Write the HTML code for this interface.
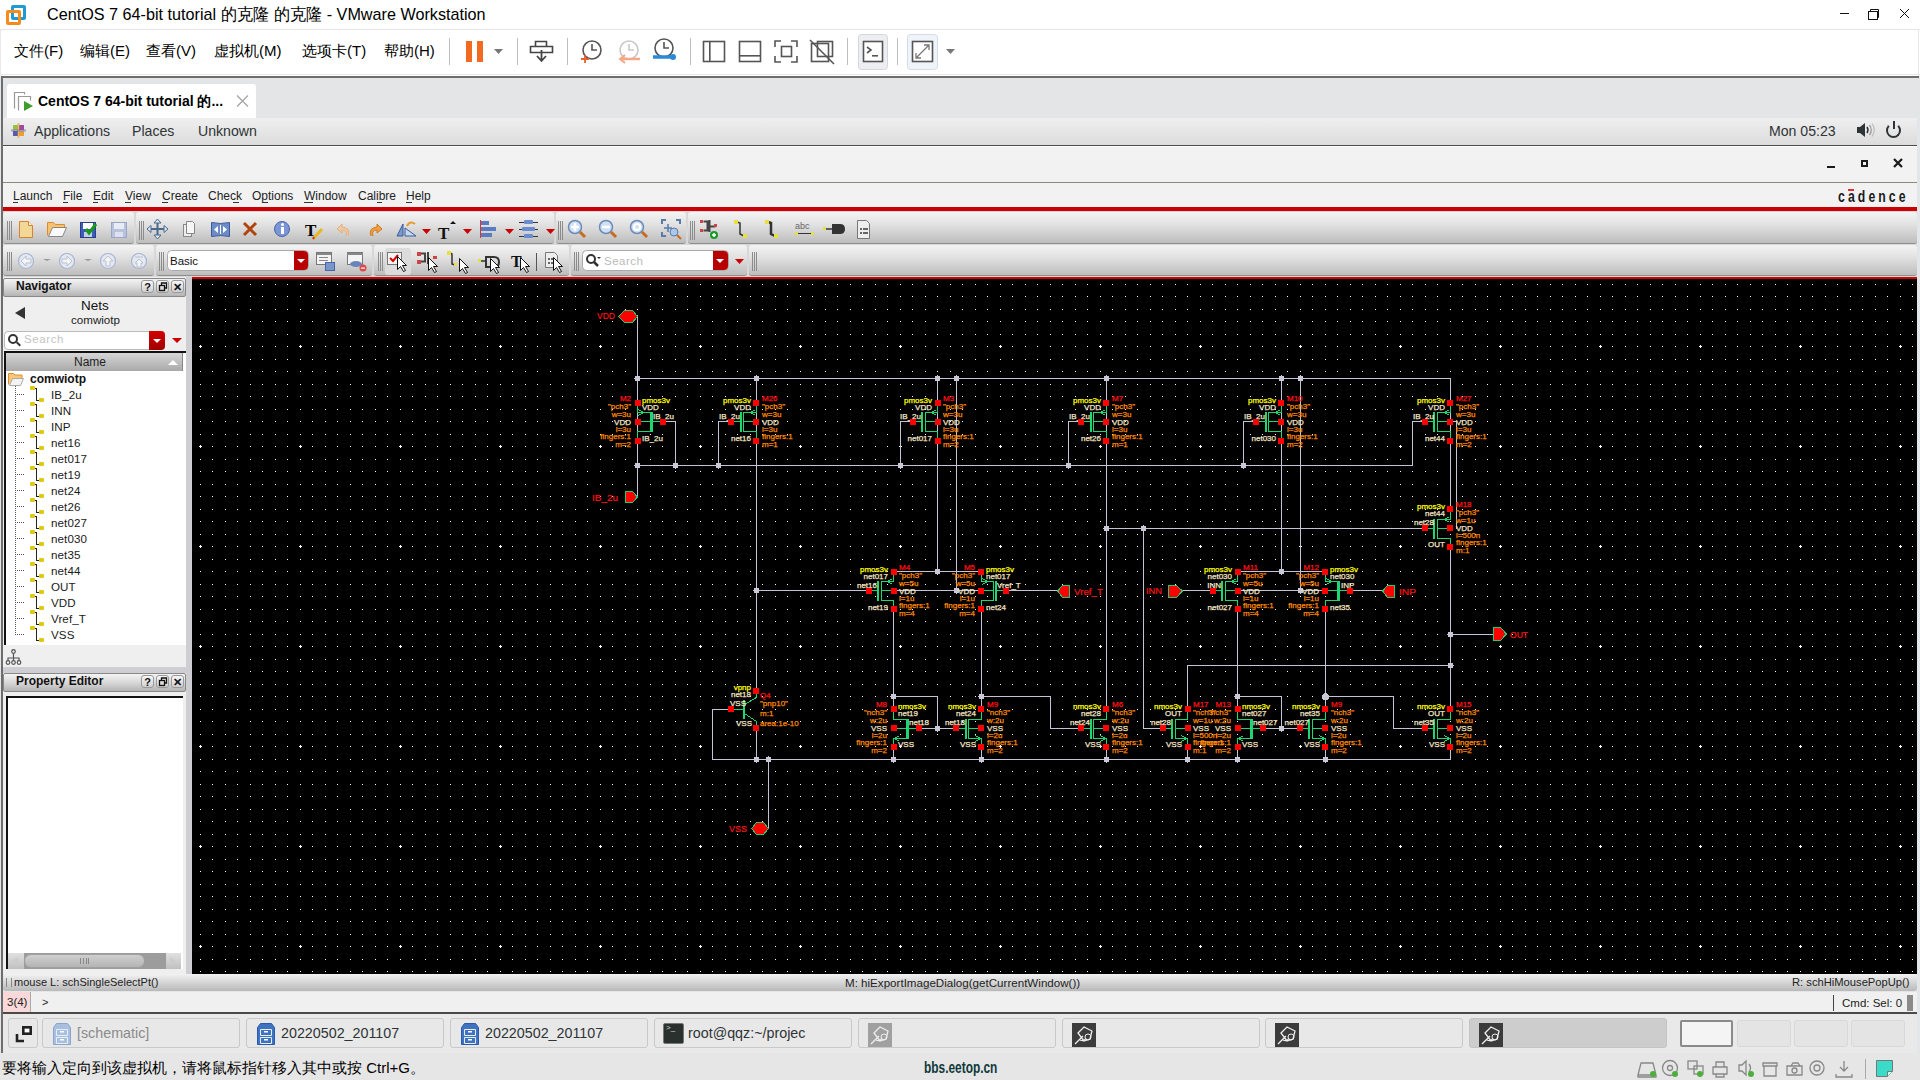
<!DOCTYPE html>
<html><head><meta charset="utf-8">
<style>
*{margin:0;padding:0;box-sizing:border-box}
html,body{width:1920px;height:1080px;overflow:hidden;background:#fff;font-family:"Liberation Sans",sans-serif;position:relative}
.a{position:absolute}
.tb{position:absolute;background:linear-gradient(#f4f4f4,#e2e2e2 40%,#bdbdbd);border-radius:3px;border-bottom:1px solid #8e8e8e}
.ttl{position:absolute;background:linear-gradient(#f4f4f4,#d8d8d8 50%,#b4b4b4);border:1px solid #888;border-radius:2px}
.bt{position:absolute;width:13px;height:13px;border:1px solid #999;border-radius:3px;background:linear-gradient(#f8f8f8,#cfcfcf);font-size:11px;line-height:12px;text-align:center;color:#111;font-weight:bold}
.tk{position:absolute;top:1018px;height:30px;background:#e8e8e8;border:1px solid #c9c9c9;border-radius:3px}
.t{position:absolute;white-space:nowrap;line-height:1}
</style></head><body>
<!-- VMware title bar -->
<div class="a" style="left:0;top:0;width:1920px;height:30px;background:#fff;border-bottom:1px solid #e6e6e6"></div>
<div id="vmlogo" class="a" style="left:6px;top:5px;width:21px;height:21px">
 <div class="a" style="left:5px;top:0;width:15px;height:15px;border:3px solid #1f9ad6;border-radius:2px"></div>
 <div class="a" style="left:0;top:5px;width:15px;height:15px;border:3px solid #f48b1b;border-radius:2px;border-right-color:#f48b1b"></div>
</div>
<div class="t" style="left:47px;top:6px;font-size:17px;color:#000;transform:scaleX(.952);transform-origin:0 0">CentOS 7 64-bit tutorial 的克隆 的克隆 - VMware Workstation</div>
<svg class="a" style="left:1830px;top:0" width="90" height="30" viewBox="1830 0 90 30"><rect x="1840" y="13" width="9" height="1" fill="#111"/><rect x="1868.5" y="11.5" width="9" height="8" fill="none" stroke="#111"/><path d="M1870.5 11.5 v-2 h8 v8 h-1" fill="none" stroke="#111"/><path d="M1900 9 l9 9 M1909 9 l-9 9" stroke="#111" stroke-width="1"/></svg>

<!-- VMware menu bar -->
<div class="a" style="left:0;top:30px;width:1920px;height:46px;background:#fff"></div><div class="a" style="left:0;top:74px;width:1920px;height:1px;background:#e8e8e8"></div><div class="a" style="left:1918px;top:29px;width:1px;height:47px;background:#e8e8e8"></div><div class="a" style="left:0;top:30px;width:1px;height:46px;background:#e8e8e8"></div>
<div class="t" style="left:14px;top:43px;font-size:15px;color:#000">文件(F)</div>
<div class="t" style="left:80px;top:43px;font-size:15px;color:#000">编辑(E)</div>
<div class="t" style="left:146px;top:43px;font-size:15px;color:#000">查看(V)</div>
<div class="t" style="left:214px;top:43px;font-size:15px;color:#000">虚拟机(M)</div>
<div class="t" style="left:302px;top:43px;font-size:15px;color:#000">选项卡(T)</div>
<div class="t" style="left:384px;top:43px;font-size:15px;color:#000">帮助(H)</div>
<svg class="a" style="left:440px;top:30px" width="520" height="46" viewBox="440 30 520 46"><rect x="449" y="38" width="1" height="27" fill="#bdbdbd"/><rect x="517" y="38" width="1" height="27" fill="#bdbdbd"/><rect x="567" y="38" width="1" height="27" fill="#bdbdbd"/><rect x="690" y="38" width="1" height="27" fill="#bdbdbd"/><rect x="847" y="38" width="1" height="27" fill="#bdbdbd"/><rect x="897" y="38" width="1" height="27" fill="#bdbdbd"/><rect x="466" y="41" width="6" height="21" fill="#f26a22"/><rect x="477" y="41" width="6" height="21" fill="#f26a22"/><path d="M494 49 h9 l-4.5 5 z" fill="#777"/><path d="M946 49 h9 l-4.5 5 z" fill="#777"/><path d="M535.5 41.5 h11 v5 h-11 z M530.5 46.5 h22 v6 h-22 z" fill="none" stroke="#444" stroke-width="1.6"/><path d="M541.5 50 v10 M537 56 l4.5 5 l4.5 -5" fill="none" stroke="#444" stroke-width="1.8"/><circle cx="592" cy="50" r="9" fill="none" stroke="#555" stroke-width="1.6"/><path d="M592 44 v6 h5" stroke="#555" stroke-width="1.6" fill="none"/><path d="M581 59 h8 M585 55 v8" stroke="#e8602c" stroke-width="1.8"/><circle cx="629" cy="50" r="9" fill="none" stroke="#c8c8c8" stroke-width="1.6"/><path d="M629 44 v6 h5" stroke="#c8c8c8" stroke-width="1.6" fill="none"/><path d="M621 59 h19" stroke="#f5a888" stroke-width="2.5"/><path d="M625 55 l-5 4 l5 4" stroke="#f5a888" stroke-width="2" fill="none"/><circle cx="664" cy="48" r="9" fill="none" stroke="#555" stroke-width="1.6"/><path d="M664 42 v6 h5" stroke="#555" stroke-width="1.6" fill="none"/><path d="M653 57 h20" stroke="#2a8ad8" stroke-width="3.5"/><circle cx="673" cy="57" r="3" fill="#2a8ad8"/><rect x="703.5" y="41.5" width="21" height="20" fill="none" stroke="#555" stroke-width="1.6"/><rect x="709" y="42" width="1.6" height="19" fill="#555"/><rect x="739.5" y="41.5" width="21" height="20" fill="none" stroke="#555" stroke-width="1.6"/><rect x="740" y="55" width="20" height="1.6" fill="#555"/><path d="M775 47 v-6 h6 M791 41 h6 v6 M797 56 v6 h-6 M781 62 h-6 v-6" fill="none" stroke="#555" stroke-width="1.6"/><rect x="781.5" y="46.5" width="10" height="10" fill="none" stroke="#555" stroke-width="1.6"/><rect x="811.5" y="43.5" width="17" height="18" fill="none" stroke="#555" stroke-width="1.6"/><rect x="817.5" y="41.5" width="15" height="15" fill="none" stroke="#555" stroke-width="1.6"/><path d="M810 40 l24 24" stroke="#555" stroke-width="1.6"/><rect x="858.5" y="34.5" width="29" height="35" rx="3" fill="#eceef2" stroke="#d4d8de"/><rect x="863.5" y="41.5" width="19" height="20" fill="#fff" stroke="#555" stroke-width="1.6"/><path d="M867 47 l4 3 l-4 3" stroke="#555" stroke-width="1.6" fill="none"/><rect x="872" y="55" width="6" height="1.6" fill="#555"/><rect x="907.5" y="34.5" width="30" height="35" rx="3" fill="#eef4fa" stroke="#d4dce6"/><rect x="912.5" y="41.5" width="20" height="20" fill="#fff" stroke="#555" stroke-width="1.6"/><path d="M916 58 l13 -13 M916 53 v5 h5 M924 45 h5 v5" stroke="#777" stroke-width="1.3" fill="none"/></svg>

<!-- VM frame -->
<div class="a" style="left:0;top:76px;width:1920px;height:977px;background:#e4e5e7"></div>
<div class="a" style="left:1px;top:76px;width:1918px;height:2px;background:#6d6d6d"></div>
<div class="a" style="left:1px;top:76px;width:2px;height:977px;background:#6d6d6d"></div>
<!-- tab -->
<div class="a" style="left:7px;top:84px;width:249px;height:34px;background:#fff;border-radius:3px 3px 0 0"></div>
<div class="t" style="left:38px;top:94px;font-size:14px;font-weight:bold;color:#000">CentOS 7 64-bit tutorial 的...</div>
<svg class="a" style="left:230px;top:90px" width="24" height="24" viewBox="230 90 24 24"><path d="M237 95.5 l11 11 M248 95.5 l-11 11" stroke="#a8a8a8" stroke-width="1.4"/></svg>
<svg class="a" style="left:12px;top:90px" width="24" height="24" viewBox="12 90 24 24"><path d="M14.5 108.5 v-16 h10 v2" fill="none" stroke="#999" stroke-width="1.2"/><path d="M18.5 110.5 v-14 h12 v4" fill="none" stroke="#999" stroke-width="1.2"/><path d="M24 101 l9 5 l-9 5 z" fill="#3aa02a"/></svg>

<!-- Guest screen -->

<!-- GNOME top bar -->
<div class="a" style="left:3px;top:118px;width:1914px;height:28px;background:linear-gradient(#efefef,#dcdcdc);border-bottom:1px solid #4a4a4a"></div>
<svg class="a" style="left:11px;top:123px" width="16" height="16" viewBox="0 0 16 16"><rect x="2" y="2" width="5" height="5" fill="#9ac040"/><rect x="8" y="2" width="5" height="5" fill="#a04aa0"/><rect x="2" y="8" width="5" height="5" fill="#5a5aa8"/><rect x="8" y="8" width="5" height="5" fill="#e8a030"/><rect x="6.5" y="0" width="2" height="15" fill="#e8a030" opacity=".6"/><rect x="0" y="6.5" width="15" height="2" fill="#5a5aa8" opacity=".5"/></svg>
<div class="t" style="left:34px;top:123px;font-size:15px;color:#2e3436;transform:scaleX(.94);transform-origin:0 0">Applications</div>
<div class="t" style="left:132px;top:123px;font-size:15px;color:#2e3436;transform:scaleX(.94);transform-origin:0 0">Places</div>
<div class="t" style="left:198px;top:123px;font-size:15px;color:#2e3436;transform:scaleX(.94);transform-origin:0 0">Unknown</div>
<div class="t" style="left:1769px;top:123px;font-size:15px;color:#2e3436;transform:scaleX(.94);transform-origin:0 0">Mon 05:23</div>
<svg class="a" style="left:1855px;top:122px" width="20" height="16" viewBox="0 0 20 16"><path d="M2 5 h3 l5 -4 v14 l-5 -4 h-3 z" fill="#2e3436"/><path d="M12 5 q2 3 0 6" stroke="#2e3436" stroke-width="1.5" fill="none"/><path d="M14.5 3 q3.5 5 0 10" stroke="#999" stroke-width="1.3" fill="none"/><path d="M17 1.5 q4.5 6.5 0 13" stroke="#bbb" stroke-width="1.2" fill="none"/></svg>
<div class="a" style="left:1886px;top:123px;width:15px;height:15px;border:2px solid #2e3436;border-radius:50%;border-top-color:transparent"></div>
<div class="a" style="left:1893px;top:121px;width:2px;height:8px;background:#2e3436"></div>
<!-- cadence window title -->
<div class="a" style="left:3px;top:146px;width:1914px;height:37px;background:#f2f2f2;border-top:1px solid #fff;border-bottom:1px solid #8a8a80"></div>
<div class="a" style="left:1827px;top:166px;width:8px;height:2px;background:#1a1a1a"></div>
<div class="a" style="left:1861px;top:160px;width:7px;height:7px;border:2px solid #1a1a1a"></div>
<svg class="a" style="left:1890px;top:156px" width="16" height="16" viewBox="1890 156 16 16"><path d="M1894 159 l8 8 M1902 159 l-8 8" stroke="#1a1a1a" stroke-width="2.2"/></svg>
<!-- cadence menu -->
<div class="a" style="left:3px;top:183px;width:1914px;height:24px;background:#f2f2f2"></div>
<div class="t" style="left:13px;top:190px;font-size:12px;color:#1a1a1a;color:#222">Launch</div>
<div class="t" style="left:63px;top:190px;font-size:12px;color:#1a1a1a;color:#222">File</div>
<div class="t" style="left:93px;top:190px;font-size:12px;color:#1a1a1a;color:#222">Edit</div>
<div class="t" style="left:125px;top:190px;font-size:12px;color:#1a1a1a;color:#222">View</div>
<div class="t" style="left:162px;top:190px;font-size:12px;color:#1a1a1a;color:#222">Create</div>
<div class="t" style="left:208px;top:190px;font-size:12px;color:#1a1a1a;color:#222">Check</div>
<div class="t" style="left:252px;top:190px;font-size:12px;color:#1a1a1a;color:#222">Options</div>
<div class="t" style="left:304px;top:190px;font-size:12px;color:#1a1a1a;color:#222">Window</div>
<div class="t" style="left:358px;top:190px;font-size:12px;color:#1a1a1a;color:#222">Calibre</div>
<div class="t" style="left:406px;top:190px;font-size:12px;color:#1a1a1a;color:#222">Help</div>
<div class="t" style="left:1838px;top:188px;font-size:17px;font-weight:bold;letter-spacing:4.3px;color:#1a1a1a;transform:scaleX(.72);transform-origin:0 0">cadence</div><div class="a" style="left:1848px;top:189px;width:6px;height:2px;background:#e03030"></div>
<div class="a" style="left:13px;top:202px;width:5px;height:1px;background:#333"></div><div class="a" style="left:63px;top:202px;width:5px;height:1px;background:#333"></div><div class="a" style="left:93px;top:202px;width:5px;height:1px;background:#333"></div><div class="a" style="left:125px;top:202px;width:6px;height:1px;background:#333"></div><div class="a" style="left:162px;top:202px;width:6px;height:1px;background:#333"></div><div class="a" style="left:233px;top:202px;width:6px;height:1px;background:#333"></div><div class="a" style="left:262px;top:202px;width:6px;height:1px;background:#333"></div><div class="a" style="left:304px;top:202px;width:9px;height:1px;background:#333"></div><div class="a" style="left:377px;top:202px;width:5px;height:1px;background:#333"></div><div class="a" style="left:406px;top:202px;width:6px;height:1px;background:#333"></div>
<div class="a" style="left:3px;top:207px;width:1914px;height:4px;background:#cc0000"></div>
<!-- toolbars -->
<div class="a" style="left:3px;top:211px;width:1914px;height:66px;background:#d8d8d8"></div>
<div class="tb" style="left:3px;top:212px;width:131px;height:32px"></div>
<div class="tb" style="left:136px;top:212px;width:418px;height:32px"></div>
<div class="tb" style="left:556px;top:212px;width:130px;height:32px"></div>
<div class="tb" style="left:688px;top:212px;width:1229px;height:32px"></div>
<div class="tb" style="left:3px;top:245px;width:151px;height:31px"></div>
<div class="tb" style="left:156px;top:245px;width:216px;height:31px"></div>
<div class="tb" style="left:374px;top:245px;width:195px;height:31px"></div>
<div class="tb" style="left:571px;top:245px;width:176px;height:31px"></div>
<div class="tb" style="left:749px;top:245px;width:1168px;height:31px"></div>



<svg class="a" style="left:0;top:211px" width="900" height="66" viewBox="0 211 900 66" font-family="Liberation Sans, sans-serif"><rect x="7" y="221" width="1" height="19" fill="#8c8c8c"/><rect x="9" y="221" width="1" height="19" fill="#8c8c8c"/><rect x="11" y="221" width="1" height="19" fill="#8c8c8c"/><path d="M19.5 221.5 h9 l4 4 v12 h-13 z" fill="#f3d797" stroke="#d9822b"/><path d="M28.5 221.5 v4 h4" fill="#fff" stroke="#d9822b"/><path d="M47.5 235.5 v-13 h6 l2 2 h9 v3" fill="#f5c270" stroke="#dc8a2a"/><path d="M48.5 236.5 l4 -9 h14 l-4 9 z" fill="#fafafa" stroke="#888"/><rect x="80.5" y="222.5" width="15" height="15" fill="#3d5db8" stroke="#2a3f8a"/><rect x="83" y="223" width="10" height="6" fill="#fff"/><rect x="84" y="232" width="8" height="5" fill="#c8d0e8"/><path d="M86 229 l3 4 l7 -9" stroke="#1a9a1a" stroke-width="3" fill="none"/><rect x="111.5" y="222.5" width="15" height="15" fill="#b8c2dc" stroke="#9aa6c8"/><rect x="114" y="223" width="10" height="6" fill="#e8ecf4"/><rect x="115" y="232" width="8" height="5" fill="#dde2ee"/><rect x="139" y="221" width="1" height="19" fill="#8c8c8c"/><rect x="141" y="221" width="1" height="19" fill="#8c8c8c"/><rect x="143" y="221" width="1" height="19" fill="#8c8c8c"/><path d="M157.5 220 v18 M148.5 229 h18" stroke="#4a6a8c" stroke-width="2"/><path d="M154 223 l3.5 -4 l3.5 4 z M154 235 l3.5 4 l3.5 -4 z M151 225.5 l-4 3.5 l4 3.5 z M164 225.5 l4 3.5 l-4 3.5 z" fill="#dfe8f2" stroke="#4a6a8c"/><rect x="183.5" y="224.5" width="8" height="12" fill="#eee" stroke="#888"/><path d="M186.5 221.5 h6 l2 2 v10 h-8 z" fill="#f6f6f6" stroke="#888"/><path d="M211.5 222.5 q9 2 18 0 v14 q-9 -2 -18 0 z" fill="#6b8cc8" stroke="#3a5a9a"/><path d="M218 226 l-4 3.5 l4 3.5 z M223 226 l4 3.5 l-4 3.5 z" fill="#fff"/><rect x="220" y="225" width="1" height="9" fill="#fff"/><path d="M244 223 l12 12 M256 223 l-12 12" stroke="#b0440c" stroke-width="3"/><circle cx="282" cy="229" r="7.5" fill="#7b95d6" stroke="#4a64a8"/><rect x="281" y="227" width="3" height="7" fill="#fff"/><circle cx="282.5" cy="224.5" r="1.5" fill="#fff"/><text x="305" y="236" font-family="Liberation Serif" font-weight="bold" font-size="17" fill="#000">T</text><path d="M313 239 l9 -10" stroke="#e8b820" stroke-width="3"/><path d="M313 239 l1 -2" stroke="#c33" stroke-width="2"/><path d="M348 236 q3 -8 -6 -9 l0 -3 l-5 5 l5 4 v-3 q6 0 4 6" fill="#efc9a0" stroke="#e0b080"/><path d="M371 236 q-3 -8 6 -9 l0 -3 l5 5 l-5 4 v-3 q-6 0 -4 6" fill="#f0a040" stroke="#d07a20"/><path d="M397 236 l6 -12 v12 z" fill="#7a9ad0" stroke="#3a5a9a"/><path d="M405 236 v-8 l11 8 z" fill="#c8d8f0" stroke="#3a5a9a"/><path d="M407 226 q3 -6 8 -2" stroke="#e89a30" stroke-width="2" fill="none"/><path d="M422 229 h9 l-4.5 5 z" fill="#cc0000"/><text x="438" y="239" font-family="Liberation Serif" font-weight="bold" font-size="17" fill="#111">T</text><path d="M450 224 l3 -3 l3 3 z" fill="#111"/><path d="M463 229 h9 l-4.5 5 z" fill="#cc0000"/><rect x="480" y="220" width="1" height="18" fill="#d33"/><rect x="481" y="221" width="8" height="4" fill="#5a7cc0"/><rect x="481" y="227" width="15" height="4" fill="#5a7cc0"/><rect x="481" y="233" width="11" height="4" fill="#5a7cc0"/><path d="M505 229 h9 l-4.5 5 z" fill="#cc0000"/><rect x="519" y="222" width="19" height="1" fill="#333"/><rect x="519" y="229" width="19" height="1" fill="#333"/><rect x="519" y="236" width="19" height="1" fill="#333"/><rect x="524" y="220" width="9" height="4" rx="1" fill="#6b8cd0"/><rect x="522" y="227" width="13" height="4" rx="1" fill="#6b8cd0"/><rect x="524" y="234" width="9" height="4" rx="1" fill="#6b8cd0"/><path d="M546 229 h9 l-4.5 5 z" fill="#cc0000"/><rect x="558" y="221" width="1" height="19" fill="#8c8c8c"/><rect x="560" y="221" width="1" height="19" fill="#8c8c8c"/><rect x="562" y="221" width="1" height="19" fill="#8c8c8c"/><circle cx="575" cy="227" r="6.5" fill="#cfe0f4" stroke="#6a8ab8" stroke-width="1.5"/><path d="M580 232 l5 5" stroke="#c86a20" stroke-width="3"/><path d="M571 227 h8 M575 223 v8" stroke="#fff" stroke-width="2.5"/><circle cx="606" cy="227" r="6.5" fill="#cfe0f4" stroke="#6a8ab8" stroke-width="1.5"/><path d="M611 232 l5 5" stroke="#c86a20" stroke-width="3"/><path d="M602 227 h8" stroke="#fff" stroke-width="2.5"/><circle cx="637" cy="227" r="6.5" fill="#cfe0f4" stroke="#6a8ab8" stroke-width="1.5"/><path d="M642 232 l5 5" stroke="#c86a20" stroke-width="3"/><circle cx="637" cy="227" r="3" fill="none" stroke="#fff" stroke-width="2"/><path d="M662 224 v-4 h4 M676 220 h4 v4 M662 232 v4 h4" stroke="#5a7aa8" stroke-width="2" fill="none"/><circle cx="674" cy="232" r="4" fill="#aac8ee" stroke="#5a7aa8"/><path d="M677 235 l4 4" stroke="#c86a20" stroke-width="2"/><path d="M668 224 v8 M664 228 h8" stroke="#5a7aa8" stroke-width="1.5"/><rect x="690" y="221" width="1" height="19" fill="#8c8c8c"/><rect x="692" y="221" width="1" height="19" fill="#8c8c8c"/><rect x="694" y="221" width="1" height="19" fill="#8c8c8c"/><rect x="700" y="220" width="3" height="3" fill="#c44"/><rect x="700" y="229" width="3" height="3" fill="#c44"/><path d="M703.5 221.5 h4 v9 h-4 M709.5 220 v12 M709.5 226.5 h6" stroke="#444" stroke-width="2" fill="none"/><rect x="714" y="224" width="3" height="3" fill="#c44"/><circle cx="714" cy="235" r="4" fill="#1a9a2a"/><path d="M712 235 h4 M714 233 v4" stroke="#fff" stroke-width="1.5"/><path d="M737 222 l3 1 v11 l4 2" stroke="#333" stroke-width="1.5" fill="none"/><rect x="734" y="220" width="4" height="4" fill="#e8e040"/><rect x="743" y="234" width="4" height="4" fill="#e8e040"/><path d="M768 222 l3 1 v11 l4 2" stroke="#333" stroke-width="2.5" fill="none"/><rect x="765" y="220" width="4" height="4" fill="#e8e040"/><rect x="774" y="234" width="4" height="4" fill="#e8e040"/><text x="795" y="229" font-size="9" fill="#666">abc</text><rect x="797" y="233" width="15" height="1" fill="#333"/><rect x="795" y="232" width="3" height="3" fill="#e8e040"/><rect x="811" y="232" width="3" height="3" fill="#e8e040"/><path d="M826 229 h6" stroke="#333" stroke-width="1.5"/><rect x="823" y="227" width="3" height="3" fill="#e8e040"/><path d="M832 224 h8 q5 0 5 5 q0 5 -5 5 h-8 z" fill="#333"/><path d="M857.5 220.5 h9 l3 3 v15 h-12 z" fill="#eee" stroke="#777"/><rect x="860" y="228" width="2" height="2" fill="#666"/><rect x="863" y="228" width="5" height="2" fill="#666"/><rect x="860" y="232" width="2" height="2" fill="#666"/><rect x="863" y="232" width="5" height="2" fill="#666"/><rect x="7" y="252" width="1" height="19" fill="#8c8c8c"/><rect x="9" y="252" width="1" height="19" fill="#8c8c8c"/><rect x="11" y="252" width="1" height="19" fill="#8c8c8c"/><circle cx="26" cy="261" r="7.5" fill="#e4e8f0" stroke="#a8b4d0" stroke-width="1.2"/><path d="M21 261 l5 -5 v3 h5 v4 h-5 v3 z" fill="#f4f4f4" stroke="#b8c0d4"/><path d="M43 259 h8 l-4 2 z" fill="#999"/><circle cx="67" cy="261" r="7.5" fill="#e4e8f0" stroke="#a8b4d0" stroke-width="1.2"/><path d="M72 261 l-5 -5 v3 h-5 v4 h5 v3 z" fill="#f4f4f4" stroke="#b8c0d4"/><path d="M84 259 h8 l-4 2 z" fill="#999"/><circle cx="108" cy="261" r="7.5" fill="#e4e8f0" stroke="#a8b4d0" stroke-width="1.2"/><path d="M108 256 l-5 5 h3 v5 h4 v-5 h3 z" fill="#f4f4f4" stroke="#b8c0d4"/><circle cx="139" cy="261" r="7.5" fill="#e4e8f0" stroke="#a8b4d0" stroke-width="1.2"/><path d="M139 259 l-4 4 h2 v4 h4 v-4 h2 z M135 257 h8" fill="#f4f4f4" stroke="#b8c0d4"/><rect x="159" y="252" width="1" height="19" fill="#8c8c8c"/><rect x="161" y="252" width="1" height="19" fill="#8c8c8c"/><rect x="163" y="252" width="1" height="19" fill="#8c8c8c"/><rect x="167.5" y="250.5" width="141" height="20" rx="4" fill="#fff" stroke="#aaa"/><path d="M294 251 h10 a4 4 0 0 1 4 4 v11 a4 4 0 0 1 -4 4 h-10 z" fill="#b80000"/><path d="M297 259 h8 l-4 4 z" fill="#fff"/><text x="170" y="265" font-size="11.5" fill="#111">Basic</text><rect x="316.5" y="252.5" width="15" height="12" fill="#f4f4f4" stroke="#777"/><rect x="317" y="253" width="14" height="2" fill="#888"/><rect x="319" y="257" width="9" height="1" fill="#888"/><rect x="319" y="260" width="9" height="1" fill="#888"/><rect x="325.5" y="262.5" width="9" height="8" fill="#7a94cc" stroke="#4a64a8"/><rect x="347.5" y="252.5" width="15" height="12" fill="#f4f4f4" stroke="#777"/><rect x="347" y="253" width="16" height="2" fill="#888"/><ellipse cx="356" cy="264" rx="6" ry="3" fill="#6a84b8"/><circle cx="363" cy="268" r="3.5" fill="#e04848"/><rect x="361" y="267.5" width="4" height="1.2" fill="#fff"/><rect x="378" y="252" width="1" height="19" fill="#8c8c8c"/><rect x="380" y="252" width="1" height="19" fill="#8c8c8c"/><rect x="382" y="252" width="1" height="19" fill="#8c8c8c"/><rect x="385" y="248" width="26" height="27" rx="3" fill="#dcdcdc"/><rect x="387.5" y="252.5" width="14" height="12" fill="#f4f4f4" stroke="#777"/><path d="M390 258 l3 3 l5 -6" stroke="#d00" stroke-width="2" fill="none"/><path d="M397.5 256.5 v13 l3 -3 l3 5 l2 -1 l-3 -5 h4 z" fill="#fff" stroke="#111"/><rect x="417" y="252" width="4" height="4" fill="#c44"/><rect x="417" y="260" width="4" height="4" fill="#c44"/><path d="M421 253.5 h4 v8 h-4 M428 252 v12" stroke="#444" stroke-width="2" fill="none"/><rect x="433" y="256" width="4" height="3" fill="#c44"/><path d="M428.5 257.5 v13 l3 -3 l3 5 l2 -1 l-3 -5 h4 z" fill="#fff" stroke="#111"/><path d="M450 253 l2 1 v10 l3 1" stroke="#333" stroke-width="1.5" fill="none"/><rect x="447" y="251" width="4" height="4" fill="#e8e040"/><rect x="454" y="263" width="3" height="3" fill="#e8e040"/><path d="M459.5 258.5 v13 l3 -3 l3 5 l2 -1 l-3 -5 h4 z" fill="#fff" stroke="#111"/><path d="M481 261 h6" stroke="#333" stroke-width="1.5"/><rect x="478" y="259" width="3" height="3" fill="#e8e040"/><path d="M486 257 h8 q5 0 5 5 q0 5 -5 5 h-8 z" fill="none" stroke="#333" stroke-width="2"/><path d="M490.5 258.5 v13 l3 -3 l3 5 l2 -1 l-3 -5 h4 z" fill="#fff" stroke="#111"/><text x="511" y="267" font-family="Liberation Serif" font-weight="bold" font-size="16" fill="#111">T</text><path d="M520.5 257.5 v13 l3 -3 l3 5 l2 -1 l-3 -5 h4 z" fill="#fff" stroke="#111"/><rect x="536" y="253" width="1" height="18" fill="#555"/><path d="M545.5 252.5 h9 l3 3 v12 h-12 z" fill="#eee" stroke="#777"/><rect x="548" y="258" width="2" height="2" fill="#666"/><rect x="551" y="258" width="4" height="2" fill="#666"/><rect x="548" y="262" width="2" height="2" fill="#666"/><rect x="551" y="262" width="4" height="2" fill="#666"/><path d="M553.5 257.5 v13 l3 -3 l3 5 l2 -1 l-3 -5 h4 z" fill="#fff" stroke="#111"/><rect x="574" y="252" width="1" height="19" fill="#8c8c8c"/><rect x="576" y="252" width="1" height="19" fill="#8c8c8c"/><rect x="578" y="252" width="1" height="19" fill="#8c8c8c"/><rect x="582.5" y="250.5" width="146" height="20" rx="4" fill="#fff" stroke="#aaa"/><path d="M713 251 h11 a4 4 0 0 1 4 4 v11 a4 4 0 0 1 -4 4 h-11 z" fill="#b80000"/><path d="M716 259 h8 l-4 4 z" fill="#fff"/><circle cx="591" cy="259" r="4" fill="none" stroke="#333" stroke-width="2"/><path d="M594 262 l4 4" stroke="#333" stroke-width="2.5"/><path d="M597 257 h4 l-2 2 z" fill="#333"/><text x="604" y="265" font-size="11.5" fill="#bbb" letter-spacing="0.5">Search</text><path d="M735 259 h9 l-4.5 5 z" fill="#cc0000"/><rect x="752" y="252" width="1" height="19" fill="#8c8c8c"/><rect x="754" y="252" width="1" height="19" fill="#8c8c8c"/><rect x="756" y="252" width="1" height="19" fill="#8c8c8c"/></svg>
<!-- left panels -->
<div class="a" style="left:3px;top:277px;width:189px;height:697px;background:#efefef"></div>
<div class="a" style="left:186px;top:277px;width:6px;height:697px;background:#cfcfd3"></div>
<div class="ttl" style="left:3px;top:278px;width:183px;height:19px"></div>
<div class="t" style="left:16px;top:280px;font-size:12px;font-weight:bold;color:#111">Navigator</div>
<div class="bt" style="left:141px;top:280px">?</div><div class="bt" style="left:156px;top:280px"></div><svg class="a" style="left:156px;top:280px" width="13" height="13" viewBox="0 0 13 13"><rect x="3.5" y="5.5" width="5" height="5" fill="none" stroke="#111" stroke-width="1.3"/><path d="M5.5 5.5 v-2.5 h5 v5 h-2" fill="none" stroke="#111" stroke-width="1.3"/></svg><div class="bt" style="left:171px;top:280px">✕</div>
<div class="a" style="left:15px;top:307px;width:0;height:0;border-top:6px solid transparent;border-bottom:6px solid transparent;border-right:10px solid #333"></div>
<div class="t" style="left:81px;top:299px;font-size:13.5px;color:#111">Nets</div>
<div class="t" style="left:71px;top:314px;font-size:11.6px;color:#222">comwiotp</div>
<div class="a" style="left:4px;top:331px;width:161px;height:19px;background:#fff;border:1px solid #bbb;border-radius:4px"></div>
<div class="a" style="left:149px;top:331px;width:16px;height:19px;background:linear-gradient(#d40000,#a00000);border-radius:0 4px 4px 0"></div>
<div class="a" style="left:153px;top:339px;width:0;height:0;border-left:4px solid transparent;border-right:4px solid transparent;border-top:4px solid #fff"></div>
<div class="a" style="left:172px;top:338px;width:0;height:0;border-left:5px solid transparent;border-right:5px solid transparent;border-top:5px solid #c00"></div>
<div class="a" style="left:8px;top:334px;width:10px;height:10px;border:2px solid #333;border-radius:50%"></div>
<div class="a" style="left:16px;top:343px;width:5px;height:2px;background:#333;transform:rotate(45deg)"></div>
<div class="t" style="left:24px;top:334px;font-size:11.5px;color:#c4c4c4;letter-spacing:.6px">Search</div>
<div class="a" style="left:4px;top:351px;width:182px;height:2px;background:#111"></div>
<div class="a" style="left:4px;top:353px;width:182px;height:292px;background:#fff;border-left:2px solid #111"></div>
<div class="a" style="left:6px;top:353px;width:177px;height:18px;background:linear-gradient(#d6d6d6,#a9a9a9);border-right:1px solid #888"></div>
<div class="t" style="left:74px;top:356px;font-size:12px;color:#222">Name</div>
<div class="a" style="left:168px;top:360px;width:0;height:0;border-left:5px solid transparent;border-right:5px solid transparent;border-bottom:5px solid #fff"></div>
<svg class="a" style="left:7px;top:371px" width="18" height="16" viewBox="0 0 18 16"><path d="M1.5 13.5 v-11 h5 l1.5 1.5 h7 v3" fill="#f8c878" stroke="#e08a30"/><path d="M2.5 14.5 l3 -7 h11 l-3 7 z" fill="#f4f4f4" stroke="#aaa"/></svg>
<div class="t" style="left:30px;top:373px;font-size:12px;font-weight:bold;color:#111">comwiotp</div>
<div class="a" style="left:15px;top:386px;width:1px;height:249px;border-left:1px dotted #555"></div>
<div class="a" style="left:15px;top:394px;width:9px;height:1px;border-top:1px dotted #555"></div><div class="a" style="left:34px;top:388px;width:3px;height:1px;background:#222"></div><div class="a" style="left:36px;top:388px;width:4px;height:13px;border-left:1px solid #222;border-bottom:1px solid #222"></div><div class="a" style="left:30px;top:386px;width:5px;height:4px;background:#e0c818;border-radius:1px"></div><div class="a" style="left:39px;top:398px;width:5px;height:4px;background:#e0c818;border-radius:1px"></div><div class="t" style="left:51px;top:389px;font-size:11.6px;color:#1a1a1a;letter-spacing:.1px">IB_2u</div>
<div class="a" style="left:15px;top:410px;width:9px;height:1px;border-top:1px dotted #555"></div><div class="a" style="left:34px;top:404px;width:3px;height:1px;background:#222"></div><div class="a" style="left:36px;top:404px;width:4px;height:13px;border-left:1px solid #222;border-bottom:1px solid #222"></div><div class="a" style="left:30px;top:402px;width:5px;height:4px;background:#e0c818;border-radius:1px"></div><div class="a" style="left:39px;top:414px;width:5px;height:4px;background:#e0c818;border-radius:1px"></div><div class="t" style="left:51px;top:405px;font-size:11.6px;color:#1a1a1a;letter-spacing:.1px">INN</div>
<div class="a" style="left:15px;top:426px;width:9px;height:1px;border-top:1px dotted #555"></div><div class="a" style="left:34px;top:420px;width:3px;height:1px;background:#222"></div><div class="a" style="left:36px;top:420px;width:4px;height:13px;border-left:1px solid #222;border-bottom:1px solid #222"></div><div class="a" style="left:30px;top:418px;width:5px;height:4px;background:#e0c818;border-radius:1px"></div><div class="a" style="left:39px;top:430px;width:5px;height:4px;background:#e0c818;border-radius:1px"></div><div class="t" style="left:51px;top:421px;font-size:11.6px;color:#1a1a1a;letter-spacing:.1px">INP</div>
<div class="a" style="left:15px;top:442px;width:9px;height:1px;border-top:1px dotted #555"></div><div class="a" style="left:34px;top:436px;width:3px;height:1px;background:#222"></div><div class="a" style="left:36px;top:436px;width:4px;height:13px;border-left:1px solid #222;border-bottom:1px solid #222"></div><div class="a" style="left:30px;top:434px;width:5px;height:4px;background:#e0c818;border-radius:1px"></div><div class="a" style="left:39px;top:446px;width:5px;height:4px;background:#e0c818;border-radius:1px"></div><div class="t" style="left:51px;top:437px;font-size:11.6px;color:#1a1a1a;letter-spacing:.1px">net16</div>
<div class="a" style="left:15px;top:458px;width:9px;height:1px;border-top:1px dotted #555"></div><div class="a" style="left:34px;top:452px;width:3px;height:1px;background:#222"></div><div class="a" style="left:36px;top:452px;width:4px;height:13px;border-left:1px solid #222;border-bottom:1px solid #222"></div><div class="a" style="left:30px;top:450px;width:5px;height:4px;background:#e0c818;border-radius:1px"></div><div class="a" style="left:39px;top:462px;width:5px;height:4px;background:#e0c818;border-radius:1px"></div><div class="t" style="left:51px;top:453px;font-size:11.6px;color:#1a1a1a;letter-spacing:.1px">net017</div>
<div class="a" style="left:15px;top:474px;width:9px;height:1px;border-top:1px dotted #555"></div><div class="a" style="left:34px;top:468px;width:3px;height:1px;background:#222"></div><div class="a" style="left:36px;top:468px;width:4px;height:13px;border-left:1px solid #222;border-bottom:1px solid #222"></div><div class="a" style="left:30px;top:466px;width:5px;height:4px;background:#e0c818;border-radius:1px"></div><div class="a" style="left:39px;top:478px;width:5px;height:4px;background:#e0c818;border-radius:1px"></div><div class="t" style="left:51px;top:469px;font-size:11.6px;color:#1a1a1a;letter-spacing:.1px">net19</div>
<div class="a" style="left:15px;top:490px;width:9px;height:1px;border-top:1px dotted #555"></div><div class="a" style="left:34px;top:484px;width:3px;height:1px;background:#222"></div><div class="a" style="left:36px;top:484px;width:4px;height:13px;border-left:1px solid #222;border-bottom:1px solid #222"></div><div class="a" style="left:30px;top:482px;width:5px;height:4px;background:#e0c818;border-radius:1px"></div><div class="a" style="left:39px;top:494px;width:5px;height:4px;background:#e0c818;border-radius:1px"></div><div class="t" style="left:51px;top:485px;font-size:11.6px;color:#1a1a1a;letter-spacing:.1px">net24</div>
<div class="a" style="left:15px;top:506px;width:9px;height:1px;border-top:1px dotted #555"></div><div class="a" style="left:34px;top:500px;width:3px;height:1px;background:#222"></div><div class="a" style="left:36px;top:500px;width:4px;height:13px;border-left:1px solid #222;border-bottom:1px solid #222"></div><div class="a" style="left:30px;top:498px;width:5px;height:4px;background:#e0c818;border-radius:1px"></div><div class="a" style="left:39px;top:510px;width:5px;height:4px;background:#e0c818;border-radius:1px"></div><div class="t" style="left:51px;top:501px;font-size:11.6px;color:#1a1a1a;letter-spacing:.1px">net26</div>
<div class="a" style="left:15px;top:522px;width:9px;height:1px;border-top:1px dotted #555"></div><div class="a" style="left:34px;top:516px;width:3px;height:1px;background:#222"></div><div class="a" style="left:36px;top:516px;width:4px;height:13px;border-left:1px solid #222;border-bottom:1px solid #222"></div><div class="a" style="left:30px;top:514px;width:5px;height:4px;background:#e0c818;border-radius:1px"></div><div class="a" style="left:39px;top:526px;width:5px;height:4px;background:#e0c818;border-radius:1px"></div><div class="t" style="left:51px;top:517px;font-size:11.6px;color:#1a1a1a;letter-spacing:.1px">net027</div>
<div class="a" style="left:15px;top:538px;width:9px;height:1px;border-top:1px dotted #555"></div><div class="a" style="left:34px;top:532px;width:3px;height:1px;background:#222"></div><div class="a" style="left:36px;top:532px;width:4px;height:13px;border-left:1px solid #222;border-bottom:1px solid #222"></div><div class="a" style="left:30px;top:530px;width:5px;height:4px;background:#e0c818;border-radius:1px"></div><div class="a" style="left:39px;top:542px;width:5px;height:4px;background:#e0c818;border-radius:1px"></div><div class="t" style="left:51px;top:533px;font-size:11.6px;color:#1a1a1a;letter-spacing:.1px">net030</div>
<div class="a" style="left:15px;top:554px;width:9px;height:1px;border-top:1px dotted #555"></div><div class="a" style="left:34px;top:548px;width:3px;height:1px;background:#222"></div><div class="a" style="left:36px;top:548px;width:4px;height:13px;border-left:1px solid #222;border-bottom:1px solid #222"></div><div class="a" style="left:30px;top:546px;width:5px;height:4px;background:#e0c818;border-radius:1px"></div><div class="a" style="left:39px;top:558px;width:5px;height:4px;background:#e0c818;border-radius:1px"></div><div class="t" style="left:51px;top:549px;font-size:11.6px;color:#1a1a1a;letter-spacing:.1px">net35</div>
<div class="a" style="left:15px;top:570px;width:9px;height:1px;border-top:1px dotted #555"></div><div class="a" style="left:34px;top:564px;width:3px;height:1px;background:#222"></div><div class="a" style="left:36px;top:564px;width:4px;height:13px;border-left:1px solid #222;border-bottom:1px solid #222"></div><div class="a" style="left:30px;top:562px;width:5px;height:4px;background:#e0c818;border-radius:1px"></div><div class="a" style="left:39px;top:574px;width:5px;height:4px;background:#e0c818;border-radius:1px"></div><div class="t" style="left:51px;top:565px;font-size:11.6px;color:#1a1a1a;letter-spacing:.1px">net44</div>
<div class="a" style="left:15px;top:586px;width:9px;height:1px;border-top:1px dotted #555"></div><div class="a" style="left:34px;top:580px;width:3px;height:1px;background:#222"></div><div class="a" style="left:36px;top:580px;width:4px;height:13px;border-left:1px solid #222;border-bottom:1px solid #222"></div><div class="a" style="left:30px;top:578px;width:5px;height:4px;background:#e0c818;border-radius:1px"></div><div class="a" style="left:39px;top:590px;width:5px;height:4px;background:#e0c818;border-radius:1px"></div><div class="t" style="left:51px;top:581px;font-size:11.6px;color:#1a1a1a;letter-spacing:.1px">OUT</div>
<div class="a" style="left:15px;top:602px;width:9px;height:1px;border-top:1px dotted #555"></div><div class="a" style="left:34px;top:596px;width:3px;height:1px;background:#222"></div><div class="a" style="left:36px;top:596px;width:4px;height:13px;border-left:1px solid #222;border-bottom:1px solid #222"></div><div class="a" style="left:30px;top:594px;width:5px;height:4px;background:#e0c818;border-radius:1px"></div><div class="a" style="left:39px;top:606px;width:5px;height:4px;background:#e0c818;border-radius:1px"></div><div class="t" style="left:51px;top:597px;font-size:11.6px;color:#1a1a1a;letter-spacing:.1px">VDD</div>
<div class="a" style="left:15px;top:618px;width:9px;height:1px;border-top:1px dotted #555"></div><div class="a" style="left:34px;top:612px;width:3px;height:1px;background:#222"></div><div class="a" style="left:36px;top:612px;width:4px;height:13px;border-left:1px solid #222;border-bottom:1px solid #222"></div><div class="a" style="left:30px;top:610px;width:5px;height:4px;background:#e0c818;border-radius:1px"></div><div class="a" style="left:39px;top:622px;width:5px;height:4px;background:#e0c818;border-radius:1px"></div><div class="t" style="left:51px;top:613px;font-size:11.6px;color:#1a1a1a;letter-spacing:.1px">Vref_T</div>
<div class="a" style="left:15px;top:634px;width:9px;height:1px;border-top:1px dotted #555"></div><div class="a" style="left:34px;top:628px;width:3px;height:1px;background:#222"></div><div class="a" style="left:36px;top:628px;width:4px;height:13px;border-left:1px solid #222;border-bottom:1px solid #222"></div><div class="a" style="left:30px;top:626px;width:5px;height:4px;background:#e0c818;border-radius:1px"></div><div class="a" style="left:39px;top:638px;width:5px;height:4px;background:#e0c818;border-radius:1px"></div><div class="t" style="left:51px;top:629px;font-size:11.6px;color:#1a1a1a;letter-spacing:.1px">VSS</div>

<svg class="a" style="left:5px;top:649px" width="17" height="17" viewBox="0 0 17 17"><g fill="none" stroke="#555" stroke-width="1.2"><circle cx="8.5" cy="2.5" r="1.8"/><circle cx="3" cy="13.5" r="1.8"/><circle cx="8.5" cy="13.5" r="1.8"/><circle cx="14" cy="13.5" r="1.8"/><path d="M8.5 4.3 v7.4 M3 11.7 v-2.7 h11 v2.7"/></g></svg>
<div class="a" style="left:3px;top:667px;width:183px;height:6px;background:#cfcfd3"></div>
<div class="ttl" style="left:3px;top:673px;width:183px;height:19px"></div>
<div class="t" style="left:16px;top:675px;font-size:12px;font-weight:bold;color:#111">Property Editor</div>
<div class="bt" style="left:141px;top:675px">?</div><div class="bt" style="left:156px;top:675px"></div><svg class="a" style="left:156px;top:675px" width="13" height="13" viewBox="0 0 13 13"><rect x="3.5" y="5.5" width="5" height="5" fill="none" stroke="#111" stroke-width="1.3"/><path d="M5.5 5.5 v-2.5 h5 v5 h-2" fill="none" stroke="#111" stroke-width="1.3"/></svg><div class="bt" style="left:171px;top:675px">✕</div>
<div class="a" style="left:6px;top:696px;width:177px;height:273px;background:#fff;border-top:2px solid #111;border-left:2px solid #111"></div>
<div class="a" style="left:8px;top:953px;width:173px;height:16px;background:linear-gradient(#e0e0e0,#c0c0c0)"></div>
<div class="a" style="left:24px;top:953px;width:142px;height:16px;background:#9c9c9c"></div><div class="a" style="left:24px;top:954px;width:121px;height:14px;background:linear-gradient(#cfcfcf,#b4b4b4);border-radius:7px;border:1px solid #a0a0a0"></div><div class="a" style="left:80px;top:958px;width:9px;height:6px;border-left:1px solid #888;border-right:1px solid #888;background:linear-gradient(90deg,transparent 2px,#888 2px,#888 3px,transparent 3px,transparent 5px,#888 5px,#888 6px,transparent 6px)"></div><div class="a" style="left:12px;top:957px;width:0;height:0;border-top:4px solid transparent;border-bottom:4px solid transparent;border-right:6px solid #ccc"></div><div class="a" style="left:170px;top:957px;width:0;height:0;border-top:4px solid transparent;border-bottom:4px solid transparent;border-left:6px solid #ccc"></div>
<!-- canvas -->
<div class="a" style="left:192px;top:277px;width:1725px;height:2px;background:#d00000"></div>
<svg class="a" style="left:192px;top:279px" width="1725" height="695" viewBox="192 279 1725 695" font-family="Liberation Sans, sans-serif" shape-rendering="crispEdges"><defs><pattern id="g1" patternUnits="userSpaceOnUse" x="200" y="296" width="25" height="25"><rect x="0" y="0" width="1" height="1" fill="#fff"/><rect x="12" y="0" width="1" height="1" fill="#fff"/><rect x="0" y="13" width="1" height="1" fill="#fff"/><rect x="12" y="13" width="1" height="1" fill="#fff"/></pattern><pattern id="g2" patternUnits="userSpaceOnUse" x="199" y="345" width="100" height="100"><rect x="0" y="1" width="3" height="1" fill="#fff"/><rect x="1" y="0" width="1" height="3" fill="#fff"/></pattern></defs><rect x="192" y="279" width="1725" height="695" fill="#000"/><rect x="192" y="279" width="1725" height="695" fill="url(#g1)"/><rect x="192" y="279" width="1725" height="695" fill="url(#g2)"/><g text-rendering="optimizeSpeed"><rect x="637" y="315" width="1" height="182" fill="#c4c4d6"/><rect x="637" y="378" width="814" height="1" fill="#c4c4d6"/><rect x="637" y="465" width="776" height="1" fill="#c4c4d6"/><rect x="662" y="421" width="14" height="1" fill="#c4c4d6"/><rect x="675" y="421" width="1" height="45" fill="#c4c4d6"/><rect x="718" y="421" width="14" height="1" fill="#c4c4d6"/><rect x="718" y="421" width="1" height="45" fill="#c4c4d6"/><rect x="900" y="421" width="13" height="1" fill="#c4c4d6"/><rect x="900" y="421" width="1" height="45" fill="#c4c4d6"/><rect x="1068" y="421" width="14" height="1" fill="#c4c4d6"/><rect x="1068" y="421" width="1" height="45" fill="#c4c4d6"/><rect x="1243" y="421" width="14" height="1" fill="#c4c4d6"/><rect x="1243" y="421" width="1" height="45" fill="#c4c4d6"/><rect x="1412" y="421" width="14" height="1" fill="#c4c4d6"/><rect x="1412" y="421" width="1" height="45" fill="#c4c4d6"/><rect x="756" y="378" width="1" height="313" fill="#c4c4d6"/><rect x="756" y="728" width="1" height="32" fill="#c4c4d6"/><rect x="937" y="378" width="1" height="194" fill="#c4c4d6"/><rect x="956" y="378" width="1" height="213" fill="#c4c4d6"/><rect x="1106" y="378" width="1" height="332" fill="#c4c4d6"/><rect x="1106" y="746" width="1" height="14" fill="#c4c4d6"/><rect x="1281" y="378" width="1" height="194" fill="#c4c4d6"/><rect x="1300" y="378" width="1" height="213" fill="#c4c4d6"/><rect x="1450" y="378" width="1" height="132" fill="#c4c4d6"/><rect x="1450" y="546" width="1" height="164" fill="#c4c4d6"/><rect x="1450" y="746" width="1" height="14" fill="#c4c4d6"/><rect x="1456" y="421" width="1" height="108" fill="#c4c4d6"/><rect x="1450" y="421" width="7" height="1" fill="#c4c4d6"/><rect x="893" y="609" width="1" height="101" fill="#c4c4d6"/><rect x="893" y="746" width="1" height="14" fill="#c4c4d6"/><rect x="981" y="609" width="1" height="101" fill="#c4c4d6"/><rect x="981" y="746" width="1" height="14" fill="#c4c4d6"/><rect x="1237" y="609" width="1" height="101" fill="#c4c4d6"/><rect x="1237" y="746" width="1" height="14" fill="#c4c4d6"/><rect x="1325" y="609" width="1" height="101" fill="#c4c4d6"/><rect x="1325" y="746" width="1" height="14" fill="#c4c4d6"/><rect x="1143" y="528" width="1" height="201" fill="#c4c4d6"/><rect x="1143" y="728" width="20" height="1" fill="#c4c4d6"/><rect x="1187" y="665" width="1" height="45" fill="#c4c4d6"/><rect x="1187" y="746" width="1" height="14" fill="#c4c4d6"/><rect x="1106" y="528" width="320" height="1" fill="#c4c4d6"/><rect x="893" y="571" width="89" height="1" fill="#c4c4d6"/><rect x="1237" y="571" width="89" height="1" fill="#c4c4d6"/><rect x="756" y="590" width="113" height="1" fill="#c4c4d6"/><rect x="893" y="590" width="89" height="1" fill="#c4c4d6"/><rect x="1006" y="590" width="51" height="1" fill="#c4c4d6"/><rect x="1181" y="590" width="32" height="1" fill="#c4c4d6"/><rect x="1237" y="590" width="89" height="1" fill="#c4c4d6"/><rect x="1350" y="590" width="32" height="1" fill="#c4c4d6"/><rect x="1450" y="634" width="44" height="1" fill="#c4c4d6"/><rect x="1187" y="665" width="264" height="1" fill="#c4c4d6"/><rect x="893" y="696" width="45" height="1" fill="#c4c4d6"/><rect x="937" y="696" width="1" height="33" fill="#c4c4d6"/><rect x="918" y="728" width="39" height="1" fill="#c4c4d6"/><rect x="981" y="696" width="70" height="1" fill="#c4c4d6"/><rect x="1050" y="696" width="1" height="33" fill="#c4c4d6"/><rect x="1050" y="728" width="32" height="1" fill="#c4c4d6"/><rect x="1237" y="696" width="45" height="1" fill="#c4c4d6"/><rect x="1281" y="696" width="1" height="33" fill="#c4c4d6"/><rect x="1262" y="728" width="39" height="1" fill="#c4c4d6"/><rect x="1325" y="696" width="69" height="1" fill="#c4c4d6"/><rect x="1393" y="696" width="1" height="33" fill="#c4c4d6"/><rect x="1393" y="728" width="33" height="1" fill="#c4c4d6"/><rect x="712" y="709" width="20" height="1" fill="#c4c4d6"/><rect x="712" y="709" width="1" height="51" fill="#c4c4d6"/><rect x="712" y="759" width="739" height="1" fill="#c4c4d6"/><rect x="768" y="759" width="1" height="70" fill="#c4c4d6"/><rect x="635" y="376" width="5" height="5" fill="#c8c8d6"/><rect x="634" y="378" width="7" height="1" fill="#c8c8d6"/><rect x="637" y="375" width="1" height="7" fill="#c8c8d6"/><rect x="754" y="376" width="5" height="5" fill="#c8c8d6"/><rect x="753" y="378" width="7" height="1" fill="#c8c8d6"/><rect x="756" y="375" width="1" height="7" fill="#c8c8d6"/><rect x="935" y="376" width="5" height="5" fill="#c8c8d6"/><rect x="934" y="378" width="7" height="1" fill="#c8c8d6"/><rect x="937" y="375" width="1" height="7" fill="#c8c8d6"/><rect x="954" y="376" width="5" height="5" fill="#c8c8d6"/><rect x="953" y="378" width="7" height="1" fill="#c8c8d6"/><rect x="956" y="375" width="1" height="7" fill="#c8c8d6"/><rect x="1104" y="376" width="5" height="5" fill="#c8c8d6"/><rect x="1103" y="378" width="7" height="1" fill="#c8c8d6"/><rect x="1106" y="375" width="1" height="7" fill="#c8c8d6"/><rect x="1279" y="376" width="5" height="5" fill="#c8c8d6"/><rect x="1278" y="378" width="7" height="1" fill="#c8c8d6"/><rect x="1281" y="375" width="1" height="7" fill="#c8c8d6"/><rect x="1298" y="376" width="5" height="5" fill="#c8c8d6"/><rect x="1297" y="378" width="7" height="1" fill="#c8c8d6"/><rect x="1300" y="375" width="1" height="7" fill="#c8c8d6"/><rect x="635" y="463" width="5" height="5" fill="#c8c8d6"/><rect x="634" y="465" width="7" height="1" fill="#c8c8d6"/><rect x="637" y="462" width="1" height="7" fill="#c8c8d6"/><rect x="673" y="463" width="5" height="5" fill="#c8c8d6"/><rect x="672" y="465" width="7" height="1" fill="#c8c8d6"/><rect x="675" y="462" width="1" height="7" fill="#c8c8d6"/><rect x="716" y="463" width="5" height="5" fill="#c8c8d6"/><rect x="715" y="465" width="7" height="1" fill="#c8c8d6"/><rect x="718" y="462" width="1" height="7" fill="#c8c8d6"/><rect x="898" y="463" width="5" height="5" fill="#c8c8d6"/><rect x="897" y="465" width="7" height="1" fill="#c8c8d6"/><rect x="900" y="462" width="1" height="7" fill="#c8c8d6"/><rect x="1066" y="463" width="5" height="5" fill="#c8c8d6"/><rect x="1065" y="465" width="7" height="1" fill="#c8c8d6"/><rect x="1068" y="462" width="1" height="7" fill="#c8c8d6"/><rect x="1241" y="463" width="5" height="5" fill="#c8c8d6"/><rect x="1240" y="465" width="7" height="1" fill="#c8c8d6"/><rect x="1243" y="462" width="1" height="7" fill="#c8c8d6"/><rect x="1104" y="526" width="5" height="5" fill="#c8c8d6"/><rect x="1103" y="528" width="7" height="1" fill="#c8c8d6"/><rect x="1106" y="525" width="1" height="7" fill="#c8c8d6"/><rect x="1141" y="526" width="5" height="5" fill="#c8c8d6"/><rect x="1140" y="528" width="7" height="1" fill="#c8c8d6"/><rect x="1143" y="525" width="1" height="7" fill="#c8c8d6"/><rect x="935" y="569" width="5" height="5" fill="#c8c8d6"/><rect x="934" y="571" width="7" height="1" fill="#c8c8d6"/><rect x="937" y="568" width="1" height="7" fill="#c8c8d6"/><rect x="1279" y="569" width="5" height="5" fill="#c8c8d6"/><rect x="1278" y="571" width="7" height="1" fill="#c8c8d6"/><rect x="1281" y="568" width="1" height="7" fill="#c8c8d6"/><rect x="754" y="588" width="5" height="5" fill="#c8c8d6"/><rect x="753" y="590" width="7" height="1" fill="#c8c8d6"/><rect x="756" y="587" width="1" height="7" fill="#c8c8d6"/><rect x="954" y="588" width="5" height="5" fill="#c8c8d6"/><rect x="953" y="590" width="7" height="1" fill="#c8c8d6"/><rect x="956" y="587" width="1" height="7" fill="#c8c8d6"/><rect x="1298" y="588" width="5" height="5" fill="#c8c8d6"/><rect x="1297" y="590" width="7" height="1" fill="#c8c8d6"/><rect x="1300" y="587" width="1" height="7" fill="#c8c8d6"/><rect x="1448" y="632" width="5" height="5" fill="#c8c8d6"/><rect x="1447" y="634" width="7" height="1" fill="#c8c8d6"/><rect x="1450" y="631" width="1" height="7" fill="#c8c8d6"/><rect x="1448" y="663" width="5" height="5" fill="#c8c8d6"/><rect x="1447" y="665" width="7" height="1" fill="#c8c8d6"/><rect x="1450" y="662" width="1" height="7" fill="#c8c8d6"/><rect x="891" y="694" width="5" height="5" fill="#c8c8d6"/><rect x="890" y="696" width="7" height="1" fill="#c8c8d6"/><rect x="893" y="693" width="1" height="7" fill="#c8c8d6"/><rect x="979" y="694" width="5" height="5" fill="#c8c8d6"/><rect x="978" y="696" width="7" height="1" fill="#c8c8d6"/><rect x="981" y="693" width="1" height="7" fill="#c8c8d6"/><rect x="1235" y="694" width="5" height="5" fill="#c8c8d6"/><rect x="1234" y="696" width="7" height="1" fill="#c8c8d6"/><rect x="1237" y="693" width="1" height="7" fill="#c8c8d6"/><rect x="935" y="726" width="5" height="5" fill="#c8c8d6"/><rect x="934" y="728" width="7" height="1" fill="#c8c8d6"/><rect x="937" y="725" width="1" height="7" fill="#c8c8d6"/><rect x="1279" y="726" width="5" height="5" fill="#c8c8d6"/><rect x="1278" y="728" width="7" height="1" fill="#c8c8d6"/><rect x="1281" y="725" width="1" height="7" fill="#c8c8d6"/><rect x="754" y="757" width="5" height="5" fill="#c8c8d6"/><rect x="753" y="759" width="7" height="1" fill="#c8c8d6"/><rect x="756" y="756" width="1" height="7" fill="#c8c8d6"/><rect x="766" y="757" width="5" height="5" fill="#c8c8d6"/><rect x="765" y="759" width="7" height="1" fill="#c8c8d6"/><rect x="768" y="756" width="1" height="7" fill="#c8c8d6"/><rect x="891" y="757" width="5" height="5" fill="#c8c8d6"/><rect x="890" y="759" width="7" height="1" fill="#c8c8d6"/><rect x="893" y="756" width="1" height="7" fill="#c8c8d6"/><rect x="979" y="757" width="5" height="5" fill="#c8c8d6"/><rect x="978" y="759" width="7" height="1" fill="#c8c8d6"/><rect x="981" y="756" width="1" height="7" fill="#c8c8d6"/><rect x="1104" y="757" width="5" height="5" fill="#c8c8d6"/><rect x="1103" y="759" width="7" height="1" fill="#c8c8d6"/><rect x="1106" y="756" width="1" height="7" fill="#c8c8d6"/><rect x="1185" y="757" width="5" height="5" fill="#c8c8d6"/><rect x="1184" y="759" width="7" height="1" fill="#c8c8d6"/><rect x="1187" y="756" width="1" height="7" fill="#c8c8d6"/><rect x="1235" y="757" width="5" height="5" fill="#c8c8d6"/><rect x="1234" y="759" width="7" height="1" fill="#c8c8d6"/><rect x="1237" y="756" width="1" height="7" fill="#c8c8d6"/><rect x="1323" y="757" width="5" height="5" fill="#c8c8d6"/><rect x="1322" y="759" width="7" height="1" fill="#c8c8d6"/><rect x="1325" y="756" width="1" height="7" fill="#c8c8d6"/><circle cx="1325.5" cy="696.5" r="3.5" fill="#c8c8d6"/><rect x="651" y="412" width="2" height="20" fill="#1ed672"/><rect x="650" y="412" width="1" height="20" fill="#1ed672"/><rect x="637" y="412" width="14" height="1" fill="#1ed672"/><rect x="637" y="405" width="1" height="8" fill="#1ed672"/><rect x="637" y="431" width="14" height="1" fill="#1ed672"/><rect x="637" y="431" width="1" height="7" fill="#1ed672"/><rect x="638" y="421" width="13" height="1" fill="#1ed672"/><rect x="653" y="421" width="9" height="1" fill="#1ed672"/><path d="M638.5 409.5 L643.5 412.5 L638.5 415.5" stroke="#1ed672" fill="none" stroke-width="1"/><text x="631" y="401" fill="#ff1010" stroke="#ff1010" stroke-width="0.25" font-size="8" text-anchor="end">M2</text><text x="631" y="409" fill="#ff8a00" stroke="#ff8a00" stroke-width="0.25" font-size="8" text-anchor="end">"pch3"</text><text x="631" y="417" fill="#ff8a00" stroke="#ff8a00" stroke-width="0.25" font-size="8" text-anchor="end">w=3u</text><text x="631" y="425" fill="#f6e6c6" stroke="#f6e6c6" stroke-width="0.25" font-size="8" text-anchor="end">VDD</text><text x="631" y="432" fill="#ff8a00" stroke="#ff8a00" stroke-width="0.25" font-size="8" text-anchor="end">l=3u</text><text x="631" y="439" fill="#ff8a00" stroke="#ff8a00" stroke-width="0.25" font-size="8" text-anchor="end">fingers:1</text><text x="631" y="447" fill="#ff8a00" stroke="#ff8a00" stroke-width="0.25" font-size="8" text-anchor="end">m=2</text><text x="642" y="403" fill="#ffff00" stroke="#ffff00" stroke-width="0.25" font-size="8" text-anchor="start">pmos3v</text><text x="642" y="410" fill="#f6e6c6" stroke="#f6e6c6" stroke-width="0.25" font-size="8" text-anchor="start">VDD</text><text x="653" y="419" fill="#f6e6c6" stroke="#f6e6c6" stroke-width="0.25" font-size="8" text-anchor="start">IB_2u</text><text x="642" y="441" fill="#f6e6c6" stroke="#f6e6c6" stroke-width="0.25" font-size="8" text-anchor="start">IB_2u</text><rect x="740" y="412" width="2" height="20" fill="#1ed672"/><rect x="743" y="412" width="1" height="20" fill="#1ed672"/><rect x="743" y="412" width="14" height="1" fill="#1ed672"/><rect x="756" y="405" width="1" height="8" fill="#1ed672"/><rect x="743" y="431" width="14" height="1" fill="#1ed672"/><rect x="756" y="431" width="1" height="7" fill="#1ed672"/><rect x="743" y="421" width="13" height="1" fill="#1ed672"/><rect x="731" y="421" width="9" height="1" fill="#1ed672"/><path d="M755.5 409.5 L750.5 412.5 L755.5 415.5" stroke="#1ed672" fill="none" stroke-width="1"/><text x="762" y="401" fill="#ff1010" stroke="#ff1010" stroke-width="0.25" font-size="8" text-anchor="start">M26</text><text x="762" y="409" fill="#ff8a00" stroke="#ff8a00" stroke-width="0.25" font-size="8" text-anchor="start">"pch3"</text><text x="762" y="417" fill="#ff8a00" stroke="#ff8a00" stroke-width="0.25" font-size="8" text-anchor="start">w=3u</text><text x="762" y="425" fill="#f6e6c6" stroke="#f6e6c6" stroke-width="0.25" font-size="8" text-anchor="start">VDD</text><text x="762" y="432" fill="#ff8a00" stroke="#ff8a00" stroke-width="0.25" font-size="8" text-anchor="start">l=3u</text><text x="762" y="439" fill="#ff8a00" stroke="#ff8a00" stroke-width="0.25" font-size="8" text-anchor="start">fingers:1</text><text x="762" y="447" fill="#ff8a00" stroke="#ff8a00" stroke-width="0.25" font-size="8" text-anchor="start">m=1</text><text x="751" y="403" fill="#ffff00" stroke="#ffff00" stroke-width="0.25" font-size="8" text-anchor="end">pmos3v</text><text x="751" y="410" fill="#f6e6c6" stroke="#f6e6c6" stroke-width="0.25" font-size="8" text-anchor="end">VDD</text><text x="740" y="419" fill="#f6e6c6" stroke="#f6e6c6" stroke-width="0.25" font-size="8" text-anchor="end">IB_2u</text><text x="751" y="441" fill="#f6e6c6" stroke="#f6e6c6" stroke-width="0.25" font-size="8" text-anchor="end">net16</text><rect x="921" y="412" width="2" height="20" fill="#1ed672"/><rect x="925" y="412" width="1" height="20" fill="#1ed672"/><rect x="925" y="412" width="13" height="1" fill="#1ed672"/><rect x="937" y="405" width="1" height="8" fill="#1ed672"/><rect x="925" y="431" width="13" height="1" fill="#1ed672"/><rect x="937" y="431" width="1" height="7" fill="#1ed672"/><rect x="925" y="421" width="12" height="1" fill="#1ed672"/><rect x="912" y="421" width="9" height="1" fill="#1ed672"/><path d="M936.5 409.5 L931.5 412.5 L936.5 415.5" stroke="#1ed672" fill="none" stroke-width="1"/><text x="943" y="401" fill="#ff1010" stroke="#ff1010" stroke-width="0.25" font-size="8" text-anchor="start">M3</text><text x="943" y="409" fill="#ff8a00" stroke="#ff8a00" stroke-width="0.25" font-size="8" text-anchor="start">"pch3"</text><text x="943" y="417" fill="#ff8a00" stroke="#ff8a00" stroke-width="0.25" font-size="8" text-anchor="start">w=3u</text><text x="943" y="425" fill="#f6e6c6" stroke="#f6e6c6" stroke-width="0.25" font-size="8" text-anchor="start">VDD</text><text x="943" y="432" fill="#ff8a00" stroke="#ff8a00" stroke-width="0.25" font-size="8" text-anchor="start">l=3u</text><text x="943" y="439" fill="#ff8a00" stroke="#ff8a00" stroke-width="0.25" font-size="8" text-anchor="start">fingers:1</text><text x="943" y="447" fill="#ff8a00" stroke="#ff8a00" stroke-width="0.25" font-size="8" text-anchor="start">m=2</text><text x="932" y="403" fill="#ffff00" stroke="#ffff00" stroke-width="0.25" font-size="8" text-anchor="end">pmos3v</text><text x="932" y="410" fill="#f6e6c6" stroke="#f6e6c6" stroke-width="0.25" font-size="8" text-anchor="end">VDD</text><text x="921" y="419" fill="#f6e6c6" stroke="#f6e6c6" stroke-width="0.25" font-size="8" text-anchor="end">IB_2u</text><text x="932" y="441" fill="#f6e6c6" stroke="#f6e6c6" stroke-width="0.25" font-size="8" text-anchor="end">net017</text><rect x="1090" y="412" width="2" height="20" fill="#1ed672"/><rect x="1093" y="412" width="1" height="20" fill="#1ed672"/><rect x="1093" y="412" width="14" height="1" fill="#1ed672"/><rect x="1106" y="405" width="1" height="8" fill="#1ed672"/><rect x="1093" y="431" width="14" height="1" fill="#1ed672"/><rect x="1106" y="431" width="1" height="7" fill="#1ed672"/><rect x="1093" y="421" width="13" height="1" fill="#1ed672"/><rect x="1081" y="421" width="9" height="1" fill="#1ed672"/><path d="M1105.5 409.5 L1100.5 412.5 L1105.5 415.5" stroke="#1ed672" fill="none" stroke-width="1"/><text x="1112" y="401" fill="#ff1010" stroke="#ff1010" stroke-width="0.25" font-size="8" text-anchor="start">M7</text><text x="1112" y="409" fill="#ff8a00" stroke="#ff8a00" stroke-width="0.25" font-size="8" text-anchor="start">"pch3"</text><text x="1112" y="417" fill="#ff8a00" stroke="#ff8a00" stroke-width="0.25" font-size="8" text-anchor="start">w=3u</text><text x="1112" y="425" fill="#f6e6c6" stroke="#f6e6c6" stroke-width="0.25" font-size="8" text-anchor="start">VDD</text><text x="1112" y="432" fill="#ff8a00" stroke="#ff8a00" stroke-width="0.25" font-size="8" text-anchor="start">l=3u</text><text x="1112" y="439" fill="#ff8a00" stroke="#ff8a00" stroke-width="0.25" font-size="8" text-anchor="start">fingers:1</text><text x="1112" y="447" fill="#ff8a00" stroke="#ff8a00" stroke-width="0.25" font-size="8" text-anchor="start">m=1</text><text x="1101" y="403" fill="#ffff00" stroke="#ffff00" stroke-width="0.25" font-size="8" text-anchor="end">pmos3v</text><text x="1101" y="410" fill="#f6e6c6" stroke="#f6e6c6" stroke-width="0.25" font-size="8" text-anchor="end">VDD</text><text x="1090" y="419" fill="#f6e6c6" stroke="#f6e6c6" stroke-width="0.25" font-size="8" text-anchor="end">IB_2u</text><text x="1101" y="441" fill="#f6e6c6" stroke="#f6e6c6" stroke-width="0.25" font-size="8" text-anchor="end">net26</text><rect x="1265" y="412" width="2" height="20" fill="#1ed672"/><rect x="1268" y="412" width="1" height="20" fill="#1ed672"/><rect x="1268" y="412" width="14" height="1" fill="#1ed672"/><rect x="1281" y="405" width="1" height="8" fill="#1ed672"/><rect x="1268" y="431" width="14" height="1" fill="#1ed672"/><rect x="1281" y="431" width="1" height="7" fill="#1ed672"/><rect x="1268" y="421" width="13" height="1" fill="#1ed672"/><rect x="1256" y="421" width="9" height="1" fill="#1ed672"/><path d="M1280.5 409.5 L1275.5 412.5 L1280.5 415.5" stroke="#1ed672" fill="none" stroke-width="1"/><text x="1287" y="401" fill="#ff1010" stroke="#ff1010" stroke-width="0.25" font-size="8" text-anchor="start">M10</text><text x="1287" y="409" fill="#ff8a00" stroke="#ff8a00" stroke-width="0.25" font-size="8" text-anchor="start">"pch3"</text><text x="1287" y="417" fill="#ff8a00" stroke="#ff8a00" stroke-width="0.25" font-size="8" text-anchor="start">w=3u</text><text x="1287" y="425" fill="#f6e6c6" stroke="#f6e6c6" stroke-width="0.25" font-size="8" text-anchor="start">VDD</text><text x="1287" y="432" fill="#ff8a00" stroke="#ff8a00" stroke-width="0.25" font-size="8" text-anchor="start">l=3u</text><text x="1287" y="439" fill="#ff8a00" stroke="#ff8a00" stroke-width="0.25" font-size="8" text-anchor="start">fingers:1</text><text x="1287" y="447" fill="#ff8a00" stroke="#ff8a00" stroke-width="0.25" font-size="8" text-anchor="start">m=2</text><text x="1276" y="403" fill="#ffff00" stroke="#ffff00" stroke-width="0.25" font-size="8" text-anchor="end">pmos3v</text><text x="1276" y="410" fill="#f6e6c6" stroke="#f6e6c6" stroke-width="0.25" font-size="8" text-anchor="end">VDD</text><text x="1265" y="419" fill="#f6e6c6" stroke="#f6e6c6" stroke-width="0.25" font-size="8" text-anchor="end">IB_2u</text><text x="1276" y="441" fill="#f6e6c6" stroke="#f6e6c6" stroke-width="0.25" font-size="8" text-anchor="end">net030</text><rect x="1433" y="412" width="2" height="20" fill="#1ed672"/><rect x="1437" y="412" width="1" height="20" fill="#1ed672"/><rect x="1437" y="412" width="14" height="1" fill="#1ed672"/><rect x="1450" y="405" width="1" height="8" fill="#1ed672"/><rect x="1437" y="431" width="14" height="1" fill="#1ed672"/><rect x="1450" y="431" width="1" height="7" fill="#1ed672"/><rect x="1437" y="421" width="13" height="1" fill="#1ed672"/><rect x="1425" y="421" width="8" height="1" fill="#1ed672"/><path d="M1449.5 409.5 L1444.5 412.5 L1449.5 415.5" stroke="#1ed672" fill="none" stroke-width="1"/><text x="1456" y="401" fill="#ff1010" stroke="#ff1010" stroke-width="0.25" font-size="8" text-anchor="start">M27</text><text x="1456" y="409" fill="#ff8a00" stroke="#ff8a00" stroke-width="0.25" font-size="8" text-anchor="start">"pch3"</text><text x="1456" y="417" fill="#ff8a00" stroke="#ff8a00" stroke-width="0.25" font-size="8" text-anchor="start">w=3u</text><text x="1456" y="425" fill="#f6e6c6" stroke="#f6e6c6" stroke-width="0.25" font-size="8" text-anchor="start">VDD</text><text x="1456" y="432" fill="#ff8a00" stroke="#ff8a00" stroke-width="0.25" font-size="8" text-anchor="start">l=3u</text><text x="1456" y="439" fill="#ff8a00" stroke="#ff8a00" stroke-width="0.25" font-size="8" text-anchor="start">fingers:1</text><text x="1456" y="447" fill="#ff8a00" stroke="#ff8a00" stroke-width="0.25" font-size="8" text-anchor="start">m=2</text><text x="1445" y="403" fill="#ffff00" stroke="#ffff00" stroke-width="0.25" font-size="8" text-anchor="end">pmos3v</text><text x="1445" y="410" fill="#f6e6c6" stroke="#f6e6c6" stroke-width="0.25" font-size="8" text-anchor="end">VDD</text><text x="1434" y="419" fill="#f6e6c6" stroke="#f6e6c6" stroke-width="0.25" font-size="8" text-anchor="end">IB_2u</text><text x="1445" y="441" fill="#f6e6c6" stroke="#f6e6c6" stroke-width="0.25" font-size="8" text-anchor="end">net44</text><rect x="1433" y="519" width="2" height="20" fill="#1ed672"/><rect x="1437" y="519" width="1" height="20" fill="#1ed672"/><rect x="1437" y="519" width="14" height="1" fill="#1ed672"/><rect x="1450" y="512" width="1" height="8" fill="#1ed672"/><rect x="1437" y="538" width="14" height="1" fill="#1ed672"/><rect x="1450" y="538" width="1" height="7" fill="#1ed672"/><rect x="1437" y="528" width="13" height="1" fill="#1ed672"/><rect x="1425" y="528" width="8" height="1" fill="#1ed672"/><path d="M1449.5 516.5 L1444.5 519.5 L1449.5 522.5" stroke="#1ed672" fill="none" stroke-width="1"/><text x="1456" y="507" fill="#ff1010" stroke="#ff1010" stroke-width="0.25" font-size="8" text-anchor="start">M18</text><text x="1456" y="515" fill="#ff8a00" stroke="#ff8a00" stroke-width="0.25" font-size="8" text-anchor="start">"pch3"</text><text x="1456" y="523" fill="#ff8a00" stroke="#ff8a00" stroke-width="0.25" font-size="8" text-anchor="start">w=1u</text><text x="1456" y="531" fill="#f6e6c6" stroke="#f6e6c6" stroke-width="0.25" font-size="8" text-anchor="start">VDD</text><text x="1456" y="538" fill="#ff8a00" stroke="#ff8a00" stroke-width="0.25" font-size="8" text-anchor="start">l=500n</text><text x="1456" y="545" fill="#ff8a00" stroke="#ff8a00" stroke-width="0.25" font-size="8" text-anchor="start">fingers:1</text><text x="1456" y="553" fill="#ff8a00" stroke="#ff8a00" stroke-width="0.25" font-size="8" text-anchor="start">m:1</text><text x="1445" y="509" fill="#ffff00" stroke="#ffff00" stroke-width="0.25" font-size="8" text-anchor="end">pmos3v</text><text x="1445" y="516" fill="#f6e6c6" stroke="#f6e6c6" stroke-width="0.25" font-size="8" text-anchor="end">net44</text><text x="1434" y="525" fill="#f6e6c6" stroke="#f6e6c6" stroke-width="0.25" font-size="8" text-anchor="end">net28</text><text x="1445" y="547" fill="#f6e6c6" stroke="#f6e6c6" stroke-width="0.25" font-size="8" text-anchor="end">OUT</text><rect x="877" y="581" width="2" height="20" fill="#1ed672"/><rect x="881" y="581" width="1" height="20" fill="#1ed672"/><rect x="881" y="581" width="13" height="1" fill="#1ed672"/><rect x="893" y="574" width="1" height="8" fill="#1ed672"/><rect x="881" y="600" width="13" height="1" fill="#1ed672"/><rect x="893" y="600" width="1" height="7" fill="#1ed672"/><rect x="881" y="590" width="12" height="1" fill="#1ed672"/><rect x="868" y="590" width="9" height="1" fill="#1ed672"/><path d="M892.5 578.5 L887.5 581.5 L892.5 584.5" stroke="#1ed672" fill="none" stroke-width="1"/><text x="899" y="570" fill="#ff1010" stroke="#ff1010" stroke-width="0.25" font-size="8" text-anchor="start">M4</text><text x="899" y="578" fill="#ff8a00" stroke="#ff8a00" stroke-width="0.25" font-size="8" text-anchor="start">"pch3"</text><text x="899" y="586" fill="#ff8a00" stroke="#ff8a00" stroke-width="0.25" font-size="8" text-anchor="start">w=5u</text><text x="899" y="594" fill="#f6e6c6" stroke="#f6e6c6" stroke-width="0.25" font-size="8" text-anchor="start">VDD</text><text x="899" y="601" fill="#ff8a00" stroke="#ff8a00" stroke-width="0.25" font-size="8" text-anchor="start">l=1u</text><text x="899" y="608" fill="#ff8a00" stroke="#ff8a00" stroke-width="0.25" font-size="8" text-anchor="start">fingers:1</text><text x="899" y="616" fill="#ff8a00" stroke="#ff8a00" stroke-width="0.25" font-size="8" text-anchor="start">m=4</text><text x="888" y="572" fill="#ffff00" stroke="#ffff00" stroke-width="0.25" font-size="8" text-anchor="end">pmos3v</text><text x="888" y="579" fill="#f6e6c6" stroke="#f6e6c6" stroke-width="0.25" font-size="8" text-anchor="end">net017</text><text x="877" y="588" fill="#f6e6c6" stroke="#f6e6c6" stroke-width="0.25" font-size="8" text-anchor="end">net16</text><text x="888" y="610" fill="#f6e6c6" stroke="#f6e6c6" stroke-width="0.25" font-size="8" text-anchor="end">net19</text><rect x="995" y="581" width="2" height="20" fill="#1ed672"/><rect x="993" y="581" width="1" height="20" fill="#1ed672"/><rect x="981" y="581" width="13" height="1" fill="#1ed672"/><rect x="981" y="574" width="1" height="8" fill="#1ed672"/><rect x="981" y="600" width="13" height="1" fill="#1ed672"/><rect x="981" y="600" width="1" height="7" fill="#1ed672"/><rect x="982" y="590" width="12" height="1" fill="#1ed672"/><rect x="997" y="590" width="9" height="1" fill="#1ed672"/><path d="M982.5 578.5 L987.5 581.5 L982.5 584.5" stroke="#1ed672" fill="none" stroke-width="1"/><text x="975" y="570" fill="#ff1010" stroke="#ff1010" stroke-width="0.25" font-size="8" text-anchor="end">M5</text><text x="975" y="578" fill="#ff8a00" stroke="#ff8a00" stroke-width="0.25" font-size="8" text-anchor="end">"pch3"</text><text x="975" y="586" fill="#ff8a00" stroke="#ff8a00" stroke-width="0.25" font-size="8" text-anchor="end">w=5u</text><text x="975" y="594" fill="#f6e6c6" stroke="#f6e6c6" stroke-width="0.25" font-size="8" text-anchor="end">VDD</text><text x="975" y="601" fill="#ff8a00" stroke="#ff8a00" stroke-width="0.25" font-size="8" text-anchor="end">l=1u</text><text x="975" y="608" fill="#ff8a00" stroke="#ff8a00" stroke-width="0.25" font-size="8" text-anchor="end">fingers:1</text><text x="975" y="616" fill="#ff8a00" stroke="#ff8a00" stroke-width="0.25" font-size="8" text-anchor="end">m=4</text><text x="986" y="572" fill="#ffff00" stroke="#ffff00" stroke-width="0.25" font-size="8" text-anchor="start">pmos3v</text><text x="986" y="579" fill="#f6e6c6" stroke="#f6e6c6" stroke-width="0.25" font-size="8" text-anchor="start">net017</text><text x="997" y="588" fill="#f6e6c6" stroke="#f6e6c6" stroke-width="0.25" font-size="8" text-anchor="start">Vref_T</text><text x="986" y="610" fill="#f6e6c6" stroke="#f6e6c6" stroke-width="0.25" font-size="8" text-anchor="start">net24</text><rect x="1221" y="581" width="2" height="20" fill="#1ed672"/><rect x="1225" y="581" width="1" height="20" fill="#1ed672"/><rect x="1225" y="581" width="13" height="1" fill="#1ed672"/><rect x="1237" y="574" width="1" height="8" fill="#1ed672"/><rect x="1225" y="600" width="13" height="1" fill="#1ed672"/><rect x="1237" y="600" width="1" height="7" fill="#1ed672"/><rect x="1225" y="590" width="12" height="1" fill="#1ed672"/><rect x="1212" y="590" width="9" height="1" fill="#1ed672"/><path d="M1236.5 578.5 L1231.5 581.5 L1236.5 584.5" stroke="#1ed672" fill="none" stroke-width="1"/><text x="1243" y="570" fill="#ff1010" stroke="#ff1010" stroke-width="0.25" font-size="8" text-anchor="start">M11</text><text x="1243" y="578" fill="#ff8a00" stroke="#ff8a00" stroke-width="0.25" font-size="8" text-anchor="start">"pch3"</text><text x="1243" y="586" fill="#ff8a00" stroke="#ff8a00" stroke-width="0.25" font-size="8" text-anchor="start">w=5u</text><text x="1243" y="594" fill="#f6e6c6" stroke="#f6e6c6" stroke-width="0.25" font-size="8" text-anchor="start">VDD</text><text x="1243" y="601" fill="#ff8a00" stroke="#ff8a00" stroke-width="0.25" font-size="8" text-anchor="start">l=1u</text><text x="1243" y="608" fill="#ff8a00" stroke="#ff8a00" stroke-width="0.25" font-size="8" text-anchor="start">fingers:1</text><text x="1243" y="616" fill="#ff8a00" stroke="#ff8a00" stroke-width="0.25" font-size="8" text-anchor="start">m=4</text><text x="1232" y="572" fill="#ffff00" stroke="#ffff00" stroke-width="0.25" font-size="8" text-anchor="end">pmos3v</text><text x="1232" y="579" fill="#f6e6c6" stroke="#f6e6c6" stroke-width="0.25" font-size="8" text-anchor="end">net030</text><text x="1221" y="588" fill="#f6e6c6" stroke="#f6e6c6" stroke-width="0.25" font-size="8" text-anchor="end">INN</text><text x="1232" y="610" fill="#f6e6c6" stroke="#f6e6c6" stroke-width="0.25" font-size="8" text-anchor="end">net027</text><rect x="1338" y="581" width="2" height="20" fill="#1ed672"/><rect x="1337" y="581" width="1" height="20" fill="#1ed672"/><rect x="1325" y="581" width="13" height="1" fill="#1ed672"/><rect x="1325" y="574" width="1" height="8" fill="#1ed672"/><rect x="1325" y="600" width="13" height="1" fill="#1ed672"/><rect x="1325" y="600" width="1" height="7" fill="#1ed672"/><rect x="1326" y="590" width="12" height="1" fill="#1ed672"/><rect x="1340" y="590" width="10" height="1" fill="#1ed672"/><path d="M1326.5 578.5 L1331.5 581.5 L1326.5 584.5" stroke="#1ed672" fill="none" stroke-width="1"/><text x="1319" y="570" fill="#ff1010" stroke="#ff1010" stroke-width="0.25" font-size="8" text-anchor="end">M12</text><text x="1319" y="578" fill="#ff8a00" stroke="#ff8a00" stroke-width="0.25" font-size="8" text-anchor="end">"pch3"</text><text x="1319" y="586" fill="#ff8a00" stroke="#ff8a00" stroke-width="0.25" font-size="8" text-anchor="end">w=5u</text><text x="1319" y="594" fill="#f6e6c6" stroke="#f6e6c6" stroke-width="0.25" font-size="8" text-anchor="end">VDD</text><text x="1319" y="601" fill="#ff8a00" stroke="#ff8a00" stroke-width="0.25" font-size="8" text-anchor="end">l=1u</text><text x="1319" y="608" fill="#ff8a00" stroke="#ff8a00" stroke-width="0.25" font-size="8" text-anchor="end">fingers:1</text><text x="1319" y="616" fill="#ff8a00" stroke="#ff8a00" stroke-width="0.25" font-size="8" text-anchor="end">m=4</text><text x="1330" y="572" fill="#ffff00" stroke="#ffff00" stroke-width="0.25" font-size="8" text-anchor="start">pmos3v</text><text x="1330" y="579" fill="#f6e6c6" stroke="#f6e6c6" stroke-width="0.25" font-size="8" text-anchor="start">net030</text><text x="1341" y="588" fill="#f6e6c6" stroke="#f6e6c6" stroke-width="0.25" font-size="8" text-anchor="start">INP</text><text x="1330" y="610" fill="#f6e6c6" stroke="#f6e6c6" stroke-width="0.25" font-size="8" text-anchor="start">net35</text><rect x="907" y="719" width="2" height="20" fill="#1ed672"/><rect x="906" y="719" width="1" height="20" fill="#1ed672"/><rect x="893" y="719" width="14" height="1" fill="#1ed672"/><rect x="893" y="712" width="1" height="8" fill="#1ed672"/><rect x="893" y="738" width="14" height="1" fill="#1ed672"/><rect x="893" y="738" width="1" height="7" fill="#1ed672"/><rect x="894" y="728" width="13" height="1" fill="#1ed672"/><rect x="909" y="728" width="9" height="1" fill="#1ed672"/><path d="M899.5 735.5 L894.5 738.5 L899.5 741.5" stroke="#1ed672" fill="none" stroke-width="1"/><text x="887" y="707" fill="#ff1010" stroke="#ff1010" stroke-width="0.25" font-size="8" text-anchor="end">M8</text><text x="887" y="715" fill="#ff8a00" stroke="#ff8a00" stroke-width="0.25" font-size="8" text-anchor="end">"nch3"</text><text x="887" y="723" fill="#ff8a00" stroke="#ff8a00" stroke-width="0.25" font-size="8" text-anchor="end">w:2u</text><text x="887" y="731" fill="#f6e6c6" stroke="#f6e6c6" stroke-width="0.25" font-size="8" text-anchor="end">VSS</text><text x="887" y="738" fill="#ff8a00" stroke="#ff8a00" stroke-width="0.25" font-size="8" text-anchor="end">l=2u</text><text x="887" y="745" fill="#ff8a00" stroke="#ff8a00" stroke-width="0.25" font-size="8" text-anchor="end">fingers:1</text><text x="887" y="753" fill="#ff8a00" stroke="#ff8a00" stroke-width="0.25" font-size="8" text-anchor="end">m=2</text><text x="898" y="709" fill="#ffff00" stroke="#ffff00" stroke-width="0.25" font-size="8" text-anchor="start">nmos3v</text><text x="898" y="716" fill="#f6e6c6" stroke="#f6e6c6" stroke-width="0.25" font-size="8" text-anchor="start">net19</text><text x="909" y="725" fill="#f6e6c6" stroke="#f6e6c6" stroke-width="0.25" font-size="8" text-anchor="start">net18</text><text x="898" y="747" fill="#f6e6c6" stroke="#f6e6c6" stroke-width="0.25" font-size="8" text-anchor="start">VSS</text><rect x="965" y="719" width="2" height="20" fill="#1ed672"/><rect x="968" y="719" width="1" height="20" fill="#1ed672"/><rect x="968" y="719" width="14" height="1" fill="#1ed672"/><rect x="981" y="712" width="1" height="8" fill="#1ed672"/><rect x="968" y="738" width="14" height="1" fill="#1ed672"/><rect x="981" y="738" width="1" height="7" fill="#1ed672"/><rect x="968" y="728" width="13" height="1" fill="#1ed672"/><rect x="956" y="728" width="9" height="1" fill="#1ed672"/><path d="M975.5 735.5 L980.5 738.5 L975.5 741.5" stroke="#1ed672" fill="none" stroke-width="1"/><text x="987" y="707" fill="#ff1010" stroke="#ff1010" stroke-width="0.25" font-size="8" text-anchor="start">M9</text><text x="987" y="715" fill="#ff8a00" stroke="#ff8a00" stroke-width="0.25" font-size="8" text-anchor="start">"nch3"</text><text x="987" y="723" fill="#ff8a00" stroke="#ff8a00" stroke-width="0.25" font-size="8" text-anchor="start">w:2u</text><text x="987" y="731" fill="#f6e6c6" stroke="#f6e6c6" stroke-width="0.25" font-size="8" text-anchor="start">VSS</text><text x="987" y="738" fill="#ff8a00" stroke="#ff8a00" stroke-width="0.25" font-size="8" text-anchor="start">l=2u</text><text x="987" y="745" fill="#ff8a00" stroke="#ff8a00" stroke-width="0.25" font-size="8" text-anchor="start">fingers:1</text><text x="987" y="753" fill="#ff8a00" stroke="#ff8a00" stroke-width="0.25" font-size="8" text-anchor="start">m=2</text><text x="976" y="709" fill="#ffff00" stroke="#ffff00" stroke-width="0.25" font-size="8" text-anchor="end">nmos3v</text><text x="976" y="716" fill="#f6e6c6" stroke="#f6e6c6" stroke-width="0.25" font-size="8" text-anchor="end">net24</text><text x="965" y="725" fill="#f6e6c6" stroke="#f6e6c6" stroke-width="0.25" font-size="8" text-anchor="end">net18</text><text x="976" y="747" fill="#f6e6c6" stroke="#f6e6c6" stroke-width="0.25" font-size="8" text-anchor="end">VSS</text><rect x="1090" y="719" width="2" height="20" fill="#1ed672"/><rect x="1093" y="719" width="1" height="20" fill="#1ed672"/><rect x="1093" y="719" width="14" height="1" fill="#1ed672"/><rect x="1106" y="712" width="1" height="8" fill="#1ed672"/><rect x="1093" y="738" width="14" height="1" fill="#1ed672"/><rect x="1106" y="738" width="1" height="7" fill="#1ed672"/><rect x="1093" y="728" width="13" height="1" fill="#1ed672"/><rect x="1081" y="728" width="9" height="1" fill="#1ed672"/><path d="M1100.5 735.5 L1105.5 738.5 L1100.5 741.5" stroke="#1ed672" fill="none" stroke-width="1"/><text x="1112" y="707" fill="#ff1010" stroke="#ff1010" stroke-width="0.25" font-size="8" text-anchor="start">M6</text><text x="1112" y="715" fill="#ff8a00" stroke="#ff8a00" stroke-width="0.25" font-size="8" text-anchor="start">"nch3"</text><text x="1112" y="723" fill="#ff8a00" stroke="#ff8a00" stroke-width="0.25" font-size="8" text-anchor="start">w:2u</text><text x="1112" y="731" fill="#f6e6c6" stroke="#f6e6c6" stroke-width="0.25" font-size="8" text-anchor="start">VSS</text><text x="1112" y="738" fill="#ff8a00" stroke="#ff8a00" stroke-width="0.25" font-size="8" text-anchor="start">l=2u</text><text x="1112" y="745" fill="#ff8a00" stroke="#ff8a00" stroke-width="0.25" font-size="8" text-anchor="start">fingers:1</text><text x="1112" y="753" fill="#ff8a00" stroke="#ff8a00" stroke-width="0.25" font-size="8" text-anchor="start">m=2</text><text x="1101" y="709" fill="#ffff00" stroke="#ffff00" stroke-width="0.25" font-size="8" text-anchor="end">nmos3v</text><text x="1101" y="716" fill="#f6e6c6" stroke="#f6e6c6" stroke-width="0.25" font-size="8" text-anchor="end">net28</text><text x="1090" y="725" fill="#f6e6c6" stroke="#f6e6c6" stroke-width="0.25" font-size="8" text-anchor="end">net24</text><text x="1101" y="747" fill="#f6e6c6" stroke="#f6e6c6" stroke-width="0.25" font-size="8" text-anchor="end">VSS</text><rect x="1171" y="719" width="2" height="20" fill="#1ed672"/><rect x="1175" y="719" width="1" height="20" fill="#1ed672"/><rect x="1175" y="719" width="13" height="1" fill="#1ed672"/><rect x="1187" y="712" width="1" height="8" fill="#1ed672"/><rect x="1175" y="738" width="13" height="1" fill="#1ed672"/><rect x="1187" y="738" width="1" height="7" fill="#1ed672"/><rect x="1175" y="728" width="12" height="1" fill="#1ed672"/><rect x="1162" y="728" width="9" height="1" fill="#1ed672"/><path d="M1181.5 735.5 L1186.5 738.5 L1181.5 741.5" stroke="#1ed672" fill="none" stroke-width="1"/><text x="1193" y="707" fill="#ff1010" stroke="#ff1010" stroke-width="0.25" font-size="8" text-anchor="start">M17</text><text x="1193" y="715" fill="#ff8a00" stroke="#ff8a00" stroke-width="0.25" font-size="8" text-anchor="start">"nch3"</text><text x="1193" y="723" fill="#ff8a00" stroke="#ff8a00" stroke-width="0.25" font-size="8" text-anchor="start">w=1u</text><text x="1193" y="731" fill="#f6e6c6" stroke="#f6e6c6" stroke-width="0.25" font-size="8" text-anchor="start">VSS</text><text x="1193" y="738" fill="#ff8a00" stroke="#ff8a00" stroke-width="0.25" font-size="8" text-anchor="start">l=500n</text><text x="1193" y="745" fill="#ff8a00" stroke="#ff8a00" stroke-width="0.25" font-size="8" text-anchor="start">fingers:1</text><text x="1193" y="753" fill="#ff8a00" stroke="#ff8a00" stroke-width="0.25" font-size="8" text-anchor="start">m:1</text><text x="1182" y="709" fill="#ffff00" stroke="#ffff00" stroke-width="0.25" font-size="8" text-anchor="end">nmos3v</text><text x="1182" y="716" fill="#f6e6c6" stroke="#f6e6c6" stroke-width="0.25" font-size="8" text-anchor="end">OUT</text><text x="1171" y="725" fill="#f6e6c6" stroke="#f6e6c6" stroke-width="0.25" font-size="8" text-anchor="end">net28</text><text x="1182" y="747" fill="#f6e6c6" stroke="#f6e6c6" stroke-width="0.25" font-size="8" text-anchor="end">VSS</text><rect x="1251" y="719" width="2" height="20" fill="#1ed672"/><rect x="1250" y="719" width="1" height="20" fill="#1ed672"/><rect x="1237" y="719" width="14" height="1" fill="#1ed672"/><rect x="1237" y="712" width="1" height="8" fill="#1ed672"/><rect x="1237" y="738" width="14" height="1" fill="#1ed672"/><rect x="1237" y="738" width="1" height="7" fill="#1ed672"/><rect x="1238" y="728" width="13" height="1" fill="#1ed672"/><rect x="1253" y="728" width="9" height="1" fill="#1ed672"/><path d="M1243.5 735.5 L1238.5 738.5 L1243.5 741.5" stroke="#1ed672" fill="none" stroke-width="1"/><text x="1231" y="707" fill="#ff1010" stroke="#ff1010" stroke-width="0.25" font-size="8" text-anchor="end">M13</text><text x="1231" y="715" fill="#ff8a00" stroke="#ff8a00" stroke-width="0.25" font-size="8" text-anchor="end">"nch3"</text><text x="1231" y="723" fill="#ff8a00" stroke="#ff8a00" stroke-width="0.25" font-size="8" text-anchor="end">w:2u</text><text x="1231" y="731" fill="#f6e6c6" stroke="#f6e6c6" stroke-width="0.25" font-size="8" text-anchor="end">VSS</text><text x="1231" y="738" fill="#ff8a00" stroke="#ff8a00" stroke-width="0.25" font-size="8" text-anchor="end">l=2u</text><text x="1231" y="745" fill="#ff8a00" stroke="#ff8a00" stroke-width="0.25" font-size="8" text-anchor="end">fingers:1</text><text x="1231" y="753" fill="#ff8a00" stroke="#ff8a00" stroke-width="0.25" font-size="8" text-anchor="end">m=2</text><text x="1242" y="709" fill="#ffff00" stroke="#ffff00" stroke-width="0.25" font-size="8" text-anchor="start">nmos3v</text><text x="1242" y="716" fill="#f6e6c6" stroke="#f6e6c6" stroke-width="0.25" font-size="8" text-anchor="start">net027</text><text x="1253" y="725" fill="#f6e6c6" stroke="#f6e6c6" stroke-width="0.25" font-size="8" text-anchor="start">net027</text><text x="1242" y="747" fill="#f6e6c6" stroke="#f6e6c6" stroke-width="0.25" font-size="8" text-anchor="start">VSS</text><rect x="1308" y="719" width="2" height="20" fill="#1ed672"/><rect x="1312" y="719" width="1" height="20" fill="#1ed672"/><rect x="1312" y="719" width="14" height="1" fill="#1ed672"/><rect x="1325" y="712" width="1" height="8" fill="#1ed672"/><rect x="1312" y="738" width="14" height="1" fill="#1ed672"/><rect x="1325" y="738" width="1" height="7" fill="#1ed672"/><rect x="1312" y="728" width="13" height="1" fill="#1ed672"/><rect x="1300" y="728" width="8" height="1" fill="#1ed672"/><path d="M1319.5 735.5 L1324.5 738.5 L1319.5 741.5" stroke="#1ed672" fill="none" stroke-width="1"/><text x="1331" y="707" fill="#ff1010" stroke="#ff1010" stroke-width="0.25" font-size="8" text-anchor="start">M9</text><text x="1331" y="715" fill="#ff8a00" stroke="#ff8a00" stroke-width="0.25" font-size="8" text-anchor="start">"nch3"</text><text x="1331" y="723" fill="#ff8a00" stroke="#ff8a00" stroke-width="0.25" font-size="8" text-anchor="start">w:2u</text><text x="1331" y="731" fill="#f6e6c6" stroke="#f6e6c6" stroke-width="0.25" font-size="8" text-anchor="start">VSS</text><text x="1331" y="738" fill="#ff8a00" stroke="#ff8a00" stroke-width="0.25" font-size="8" text-anchor="start">l=2u</text><text x="1331" y="745" fill="#ff8a00" stroke="#ff8a00" stroke-width="0.25" font-size="8" text-anchor="start">fingers:1</text><text x="1331" y="753" fill="#ff8a00" stroke="#ff8a00" stroke-width="0.25" font-size="8" text-anchor="start">m=2</text><text x="1320" y="709" fill="#ffff00" stroke="#ffff00" stroke-width="0.25" font-size="8" text-anchor="end">nmos3v</text><text x="1320" y="716" fill="#f6e6c6" stroke="#f6e6c6" stroke-width="0.25" font-size="8" text-anchor="end">net35</text><text x="1309" y="725" fill="#f6e6c6" stroke="#f6e6c6" stroke-width="0.25" font-size="8" text-anchor="end">net027</text><text x="1320" y="747" fill="#f6e6c6" stroke="#f6e6c6" stroke-width="0.25" font-size="8" text-anchor="end">VSS</text><rect x="1433" y="719" width="2" height="20" fill="#1ed672"/><rect x="1437" y="719" width="1" height="20" fill="#1ed672"/><rect x="1437" y="719" width="14" height="1" fill="#1ed672"/><rect x="1450" y="712" width="1" height="8" fill="#1ed672"/><rect x="1437" y="738" width="14" height="1" fill="#1ed672"/><rect x="1450" y="738" width="1" height="7" fill="#1ed672"/><rect x="1437" y="728" width="13" height="1" fill="#1ed672"/><rect x="1425" y="728" width="8" height="1" fill="#1ed672"/><path d="M1444.5 735.5 L1449.5 738.5 L1444.5 741.5" stroke="#1ed672" fill="none" stroke-width="1"/><text x="1456" y="707" fill="#ff1010" stroke="#ff1010" stroke-width="0.25" font-size="8" text-anchor="start">M15</text><text x="1456" y="715" fill="#ff8a00" stroke="#ff8a00" stroke-width="0.25" font-size="8" text-anchor="start">"nch3"</text><text x="1456" y="723" fill="#ff8a00" stroke="#ff8a00" stroke-width="0.25" font-size="8" text-anchor="start">w:2u</text><text x="1456" y="731" fill="#f6e6c6" stroke="#f6e6c6" stroke-width="0.25" font-size="8" text-anchor="start">VSS</text><text x="1456" y="738" fill="#ff8a00" stroke="#ff8a00" stroke-width="0.25" font-size="8" text-anchor="start">l=2u</text><text x="1456" y="745" fill="#ff8a00" stroke="#ff8a00" stroke-width="0.25" font-size="8" text-anchor="start">fingers:1</text><text x="1456" y="753" fill="#ff8a00" stroke="#ff8a00" stroke-width="0.25" font-size="8" text-anchor="start">m=2</text><text x="1445" y="709" fill="#ffff00" stroke="#ffff00" stroke-width="0.25" font-size="8" text-anchor="end">nmos3v</text><text x="1445" y="716" fill="#f6e6c6" stroke="#f6e6c6" stroke-width="0.25" font-size="8" text-anchor="end">OUT</text><text x="1434" y="725" fill="#f6e6c6" stroke="#f6e6c6" stroke-width="0.25" font-size="8" text-anchor="end">net35</text><text x="1445" y="747" fill="#f6e6c6" stroke="#f6e6c6" stroke-width="0.25" font-size="8" text-anchor="end">VSS</text><rect x="743" y="700" width="2" height="19" fill="#1ed672"/><rect x="734" y="709" width="9" height="1" fill="#1ed672"/><path d="M744.5 704.5 L756.5 697.5 L756.5 691" stroke="#1ed672" fill="none"/><path d="M744.5 713.5 L756.5 721.5 L756.5 728" stroke="#1ed672" fill="none"/><text x="751" y="690" fill="#ffff00" stroke="#ffff00" stroke-width="0.25" font-size="8" text-anchor="end">vpnp</text><text x="751" y="697" fill="#f6e6c6" stroke="#f6e6c6" stroke-width="0.25" font-size="8" text-anchor="end">net18</text><text x="746" y="706" fill="#f6e6c6" stroke="#f6e6c6" stroke-width="0.25" font-size="8" text-anchor="end">VSS</text><text x="752" y="726" fill="#f6e6c6" stroke="#f6e6c6" stroke-width="0.25" font-size="8" text-anchor="end">VSS</text><text x="760" y="698" fill="#ff1010" stroke="#ff1010" stroke-width="0.25" font-size="8" text-anchor="start">Q4</text><text x="760" y="706" fill="#ff8a00" stroke="#ff8a00" stroke-width="0.25" font-size="8" text-anchor="start">"pnp10"</text><text x="760" y="716" fill="#ff8a00" stroke="#ff8a00" stroke-width="0.25" font-size="8" text-anchor="start">m:1</text><text x="760" y="726" fill="#ff8a00" stroke="#ff8a00" stroke-width="0.25" font-size="8" text-anchor="start">area:1e-10</text><polygon points="618.5,316.5 624.5,310.5 632.5,310.5 637.5,316.5 632.5,322.5 624.5,322.5" fill="#ff0000" stroke="#22cc77" stroke-width="1"/><text x="597" y="319" fill="#ff1010" stroke="#ff1010" stroke-width="0.2" font-size="9.8" textLength="18" lengthAdjust="spacingAndGlyphs">VDD</text><polygon points="625.5,491.5 632.5,491.5 637.5,497 632.5,502.5 625.5,502.5" fill="#ff0000" stroke="#22cc77" stroke-width="1"/><text x="592" y="501" fill="#ff1010" stroke="#ff1010" stroke-width="0.2" font-size="9.8" textLength="26" lengthAdjust="spacingAndGlyphs">IB_2u</text><polygon points="751.5,828.5 756.5,822.5 763.5,822.5 768.5,828.5 763.5,834.5 756.5,834.5" fill="#ff0000" stroke="#22cc77" stroke-width="1"/><text x="729" y="832" fill="#ff1010" stroke="#ff1010" stroke-width="0.2" font-size="9.8" textLength="18" lengthAdjust="spacingAndGlyphs">VSS</text><polygon points="1057.5,591 1062.5,585.5 1069.5,585.5 1069.5,597.5 1062.5,597.5" fill="#ff0000" stroke="#22cc77" stroke-width="1"/><text x="1074" y="595" fill="#ff1010" stroke="#ff1010" stroke-width="0.2" font-size="9.8" textLength="29" lengthAdjust="spacingAndGlyphs">Vref_T</text><polygon points="1168.5,585.5 1176.5,585.5 1182.5,591 1176.5,597.5 1168.5,597.5" fill="#ff0000" stroke="#22cc77" stroke-width="1"/><text x="1146" y="594" fill="#ff1010" stroke="#ff1010" stroke-width="0.2" font-size="9.8" textLength="16" lengthAdjust="spacingAndGlyphs">INN</text><polygon points="1382.5,591 1387.5,585.5 1394.5,585.5 1394.5,597.5 1387.5,597.5" fill="#ff0000" stroke="#22cc77" stroke-width="1"/><text x="1399" y="595" fill="#ff1010" stroke="#ff1010" stroke-width="0.2" font-size="9.8" textLength="17" lengthAdjust="spacingAndGlyphs">INP</text><polygon points="1493.5,627.5 1500.5,627.5 1506.5,634 1500.5,640.5 1493.5,640.5" fill="#ff0000" stroke="#22cc77" stroke-width="1"/><text x="1510" y="638" fill="#ff1010" stroke="#ff1010" stroke-width="0.2" font-size="9.8" textLength="18" lengthAdjust="spacingAndGlyphs">OUT</text><rect x="635" y="400" width="6" height="6" fill="#ff0000"/><rect x="635" y="419" width="6" height="6" fill="#ff0000"/><rect x="635" y="438" width="6" height="6" fill="#ff0000"/><rect x="660" y="419" width="6" height="6" fill="#ff0000"/><rect x="753" y="400" width="6" height="6" fill="#ff0000"/><rect x="753" y="419" width="6" height="6" fill="#ff0000"/><rect x="753" y="438" width="6" height="6" fill="#ff0000"/><rect x="728" y="419" width="6" height="6" fill="#ff0000"/><rect x="935" y="400" width="6" height="6" fill="#ff0000"/><rect x="935" y="419" width="6" height="6" fill="#ff0000"/><rect x="935" y="438" width="6" height="6" fill="#ff0000"/><rect x="910" y="419" width="6" height="6" fill="#ff0000"/><rect x="1103" y="400" width="6" height="6" fill="#ff0000"/><rect x="1103" y="419" width="6" height="6" fill="#ff0000"/><rect x="1103" y="438" width="6" height="6" fill="#ff0000"/><rect x="1078" y="419" width="6" height="6" fill="#ff0000"/><rect x="1278" y="400" width="6" height="6" fill="#ff0000"/><rect x="1278" y="419" width="6" height="6" fill="#ff0000"/><rect x="1278" y="438" width="6" height="6" fill="#ff0000"/><rect x="1253" y="419" width="6" height="6" fill="#ff0000"/><rect x="1447" y="400" width="6" height="6" fill="#ff0000"/><rect x="1447" y="419" width="6" height="6" fill="#ff0000"/><rect x="1447" y="438" width="6" height="6" fill="#ff0000"/><rect x="1422" y="419" width="6" height="6" fill="#ff0000"/><rect x="1447" y="506" width="6" height="6" fill="#ff0000"/><rect x="1447" y="525" width="6" height="6" fill="#ff0000"/><rect x="1447" y="544" width="6" height="6" fill="#ff0000"/><rect x="1422" y="525" width="6" height="6" fill="#ff0000"/><rect x="891" y="569" width="6" height="6" fill="#ff0000"/><rect x="891" y="588" width="6" height="6" fill="#ff0000"/><rect x="891" y="606" width="6" height="6" fill="#ff0000"/><rect x="866" y="588" width="6" height="6" fill="#ff0000"/><rect x="978" y="569" width="6" height="6" fill="#ff0000"/><rect x="978" y="588" width="6" height="6" fill="#ff0000"/><rect x="978" y="606" width="6" height="6" fill="#ff0000"/><rect x="1003" y="588" width="6" height="6" fill="#ff0000"/><rect x="1235" y="569" width="6" height="6" fill="#ff0000"/><rect x="1235" y="588" width="6" height="6" fill="#ff0000"/><rect x="1235" y="606" width="6" height="6" fill="#ff0000"/><rect x="1210" y="588" width="6" height="6" fill="#ff0000"/><rect x="1322" y="569" width="6" height="6" fill="#ff0000"/><rect x="1322" y="588" width="6" height="6" fill="#ff0000"/><rect x="1322" y="606" width="6" height="6" fill="#ff0000"/><rect x="1347" y="588" width="6" height="6" fill="#ff0000"/><rect x="891" y="706" width="6" height="6" fill="#ff0000"/><rect x="891" y="725" width="6" height="6" fill="#ff0000"/><rect x="891" y="744" width="6" height="6" fill="#ff0000"/><rect x="916" y="725" width="6" height="6" fill="#ff0000"/><rect x="978" y="706" width="6" height="6" fill="#ff0000"/><rect x="978" y="725" width="6" height="6" fill="#ff0000"/><rect x="978" y="744" width="6" height="6" fill="#ff0000"/><rect x="953" y="725" width="6" height="6" fill="#ff0000"/><rect x="1103" y="706" width="6" height="6" fill="#ff0000"/><rect x="1103" y="725" width="6" height="6" fill="#ff0000"/><rect x="1103" y="744" width="6" height="6" fill="#ff0000"/><rect x="1078" y="725" width="6" height="6" fill="#ff0000"/><rect x="1185" y="706" width="6" height="6" fill="#ff0000"/><rect x="1185" y="725" width="6" height="6" fill="#ff0000"/><rect x="1185" y="744" width="6" height="6" fill="#ff0000"/><rect x="1160" y="725" width="6" height="6" fill="#ff0000"/><rect x="1235" y="706" width="6" height="6" fill="#ff0000"/><rect x="1235" y="725" width="6" height="6" fill="#ff0000"/><rect x="1235" y="744" width="6" height="6" fill="#ff0000"/><rect x="1260" y="725" width="6" height="6" fill="#ff0000"/><rect x="1322" y="706" width="6" height="6" fill="#ff0000"/><rect x="1322" y="725" width="6" height="6" fill="#ff0000"/><rect x="1322" y="744" width="6" height="6" fill="#ff0000"/><rect x="1297" y="725" width="6" height="6" fill="#ff0000"/><rect x="1447" y="706" width="6" height="6" fill="#ff0000"/><rect x="1447" y="725" width="6" height="6" fill="#ff0000"/><rect x="1447" y="744" width="6" height="6" fill="#ff0000"/><rect x="1422" y="725" width="6" height="6" fill="#ff0000"/><rect x="753" y="688" width="6" height="6" fill="#ff0000"/><rect x="728" y="706" width="6" height="6" fill="#ff0000"/><rect x="753" y="725" width="6" height="6" fill="#ff0000"/></g></svg>
<!-- status -->
<div class="a" style="left:3px;top:974px;width:1914px;height:17px;background:linear-gradient(#f2f2f2,#b9b9b9);border-radius:3px"></div>
<div class="a" style="left:6px;top:978px;width:6px;height:9px;border-left:1px solid #888;border-right:1px solid #888"></div>
<div class="t" style="left:14px;top:977px;font-size:11px;color:#222">mouse L: schSingleSelectPt()</div>
<div class="t" style="left:845px;top:977px;font-size:11.6px;color:#222">M: hiExportImageDialog(getCurrentWindow())</div>
<div class="t" style="left:1792px;top:977px;font-size:11.2px;color:#222">R: schHiMousePopUp()</div>
<div class="a" style="left:3px;top:992px;width:1914px;height:22px;background:#f0f0f0;border-bottom:2px solid #4a4a4a"></div>
<div class="a" style="left:3px;top:992px;width:28px;height:20px;background:#f8d8d8;border-right:1px solid #aaa"></div>
<div class="t" style="left:7px;top:997px;font-size:11.5px;color:#222">3(4)</div>
<div class="t" style="left:42px;top:997px;font-size:11px;color:#222">&gt;</div>
<div class="a" style="left:1833px;top:995px;width:1px;height:16px;background:#444"></div>
<div class="t" style="left:1842px;top:998px;font-size:11.5px;color:#222">Cmd: Sel: 0</div>
<div class="a" style="left:1907px;top:995px;width:6px;height:16px;background:#8a8a8a"></div>
<!-- taskbar -->
<div class="a" style="left:3px;top:1014px;width:1914px;height:39px;background:#e9e9e9"></div>
<div class="tk" style="left:8px;width:30px"></div>
<svg class="a" style="left:14px;top:1024px" width="20" height="20" viewBox="0 0 20 20"><path d="M3 10 v7 h7" fill="none" stroke="#222" stroke-width="2.6"/><rect x="9.3" y="3.3" width="7.4" height="6.4" fill="#fff" stroke="#222" stroke-width="2.6"/></svg>
<div class="tk" style="left:42px;width:198px;"></div><svg class="a" style="left:52px;top:1022px" width="20" height="24" viewBox="0 0 20 24"><path d="M1.5 5.5 l3 -4 h11 l3 4 v17 h-17 z" fill="#a8bfe0" stroke="#8aa4cc"/><path d="M4.5 7.5 h11 v6 h-11 z M4.5 15.5 h11 v6 h-11 z" fill="none" stroke="#e8eef8"/><rect x="8" y="9" width="4" height="1.5" fill="#fff"/><rect x="8" y="17" width="4" height="1.5" fill="#fff"/></svg><div class="t" style="left:77px;top:1026px;font-size:14.3px;color:#8a8a8a">[schematic]</div><div class="tk" style="left:246px;width:198px;"></div><svg class="a" style="left:256px;top:1022px" width="20" height="24" viewBox="0 0 20 24"><path d="M1.5 5.5 l3 -4 h11 l3 4 v17 h-17 z" fill="#3f72c0" stroke="#2a5aa8"/><path d="M4.5 7.5 h11 v6 h-11 z M4.5 15.5 h11 v6 h-11 z" fill="none" stroke="#e8eef8"/><rect x="8" y="9" width="4" height="1.5" fill="#fff"/><rect x="8" y="17" width="4" height="1.5" fill="#fff"/></svg><div class="t" style="left:281px;top:1026px;font-size:14.3px;color:#2e3436">20220502_201107</div><div class="tk" style="left:450px;width:198px;"></div><svg class="a" style="left:460px;top:1022px" width="20" height="24" viewBox="0 0 20 24"><path d="M1.5 5.5 l3 -4 h11 l3 4 v17 h-17 z" fill="#3f72c0" stroke="#2a5aa8"/><path d="M4.5 7.5 h11 v6 h-11 z M4.5 15.5 h11 v6 h-11 z" fill="none" stroke="#e8eef8"/><rect x="8" y="9" width="4" height="1.5" fill="#fff"/><rect x="8" y="17" width="4" height="1.5" fill="#fff"/></svg><div class="t" style="left:485px;top:1026px;font-size:14.3px;color:#2e3436">20220502_201107</div><div class="tk" style="left:654px;width:198px;"></div><div class="a" style="left:663px;top:1023px;width:21px;height:21px;background:#2a302e;border:1px solid #777;border-radius:2px"></div><div class="t" style="left:666px;top:1024px;font-size:8px;color:#ddd">&gt;_</div><div class="t" style="left:688px;top:1026px;font-size:14.3px;color:#2e3436">root@qqz:~/projec</div><div class="tk" style="left:858px;width:198px;"></div><svg class="a" style="left:868px;top:1023px" width="24" height="24" viewBox="0 0 24 24"><rect width="24" height="24" fill="#a0a0a0"/><path d="M3 21 l8 -8 M6 10 l6 -6 l8 4 l-2 8 l-6 2 z M8 17 q4 2 6 -2" stroke="#eee" stroke-width="1.3" fill="none"/><circle cx="16" cy="14" r="3" fill="none" stroke="#eee"/></svg><div class="tk" style="left:1062px;width:198px;"></div><svg class="a" style="left:1072px;top:1023px" width="24" height="24" viewBox="0 0 24 24"><rect width="24" height="24" fill="#3c3c3c"/><path d="M3 21 l8 -8 M6 10 l6 -6 l8 4 l-2 8 l-6 2 z M8 17 q4 2 6 -2" stroke="#eee" stroke-width="1.3" fill="none"/><circle cx="16" cy="14" r="3" fill="none" stroke="#eee"/></svg><div class="tk" style="left:1265px;width:198px;"></div><svg class="a" style="left:1275px;top:1023px" width="24" height="24" viewBox="0 0 24 24"><rect width="24" height="24" fill="#3c3c3c"/><path d="M3 21 l8 -8 M6 10 l6 -6 l8 4 l-2 8 l-6 2 z M8 17 q4 2 6 -2" stroke="#eee" stroke-width="1.3" fill="none"/><circle cx="16" cy="14" r="3" fill="none" stroke="#eee"/></svg><div class="tk" style="left:1469px;width:198px;background:#cdcdcd;border-color:#c4c4c4;"></div><svg class="a" style="left:1479px;top:1023px" width="24" height="24" viewBox="0 0 24 24"><rect width="24" height="24" fill="#3c3c3c"/><path d="M3 21 l8 -8 M6 10 l6 -6 l8 4 l-2 8 l-6 2 z M8 17 q4 2 6 -2" stroke="#eee" stroke-width="1.3" fill="none"/><circle cx="16" cy="14" r="3" fill="none" stroke="#eee"/></svg>
<div class="a" style="left:1680px;top:1020px;width:53px;height:27px;background:#f4f4f4;border:2px solid #8a8a8a;border-radius:2px"></div>
<div class="a" style="left:1737px;top:1020px;width:54px;height:27px;background:#e4e4e4;border:1px solid #d8d8d8;border-radius:3px"></div>
<div class="a" style="left:1794px;top:1020px;width:54px;height:27px;background:#e4e4e4;border:1px solid #d8d8d8;border-radius:3px"></div>
<div class="a" style="left:1851px;top:1020px;width:54px;height:27px;background:#e4e4e4;border:1px solid #d8d8d8;border-radius:3px"></div>

<!-- bottom VMware status bar -->
<div class="a" style="left:0;top:1053px;width:1920px;height:27px;background:#e6e6e6"></div>
<div class="t" style="left:2px;top:1060px;font-size:15px;color:#000">要将输入定向到该虚拟机，请将鼠标指针移入其中或按 Ctrl+G。</div>
<svg class="a" style="left:1630px;top:1055px" width="290" height="25" viewBox="1630 1055 290 25">
<g fill="none" stroke="#888" stroke-width="1.3">
<path d="M1638 1075 l3 -12 h12 l3 12 z M1638 1075 v2 h18 v-2"/>
<circle cx="1670" cy="1068" r="7.5"/><circle cx="1670" cy="1068" r="2.5"/>
<rect x="1688" y="1061" width="9" height="8"/><rect x="1694" y="1066" width="9" height="8"/>
<path d="M1713 1067 h14 v7 h-14 z M1716 1067 v-5 h8 v5 M1716 1074 v3 h8 v-3"/>
<path d="M1739 1065 h3 l4 -4 v14 l-4 -4 h-3 z M1749 1064 q3 4 0 8"/>
<path d="M1763 1063 h14 v3 h-14 z M1764 1066 v10 h12 v-10"/>
<path d="M1787 1066 h15 v9 h-15 z M1791 1066 l2 -3 h5 l2 3"/><circle cx="1794.5" cy="1070.5" r="2.5"/>
<circle cx="1817" cy="1068" r="7"/><circle cx="1817" cy="1068" r="3"/>
<path d="M1836 1074 v3 h16 v-3 M1844 1061 v9 M1840 1067 l4 4 l4 -4"/>
</g>
<circle cx="1675" cy="1074" r="3" fill="#4caf3c"/><circle cx="1700" cy="1074" r="3" fill="#4caf3c"/><circle cx="1653" cy="1074" r="3" fill="#4caf3c"/><circle cx="1751" cy="1074" r="3" fill="#4caf3c"/>
<rect x="1865" y="1059" width="1" height="20" fill="#aaa"/>
<path d="M1876.5 1060.5 h16 v11 l-5 5 h-11 z" fill="#3adcc8" stroke="#777"/><path d="M1887.5 1076.5 v-5 h5" fill="#cfe" stroke="#777"/>
</svg>
<div class="t" style="left:924px;top:1059px;font-size:17px;font-weight:bold;color:#0f3a3a;transform:scaleX(.70);transform-origin:0 0">bbs.eetop.cn</div>
</body></html>
